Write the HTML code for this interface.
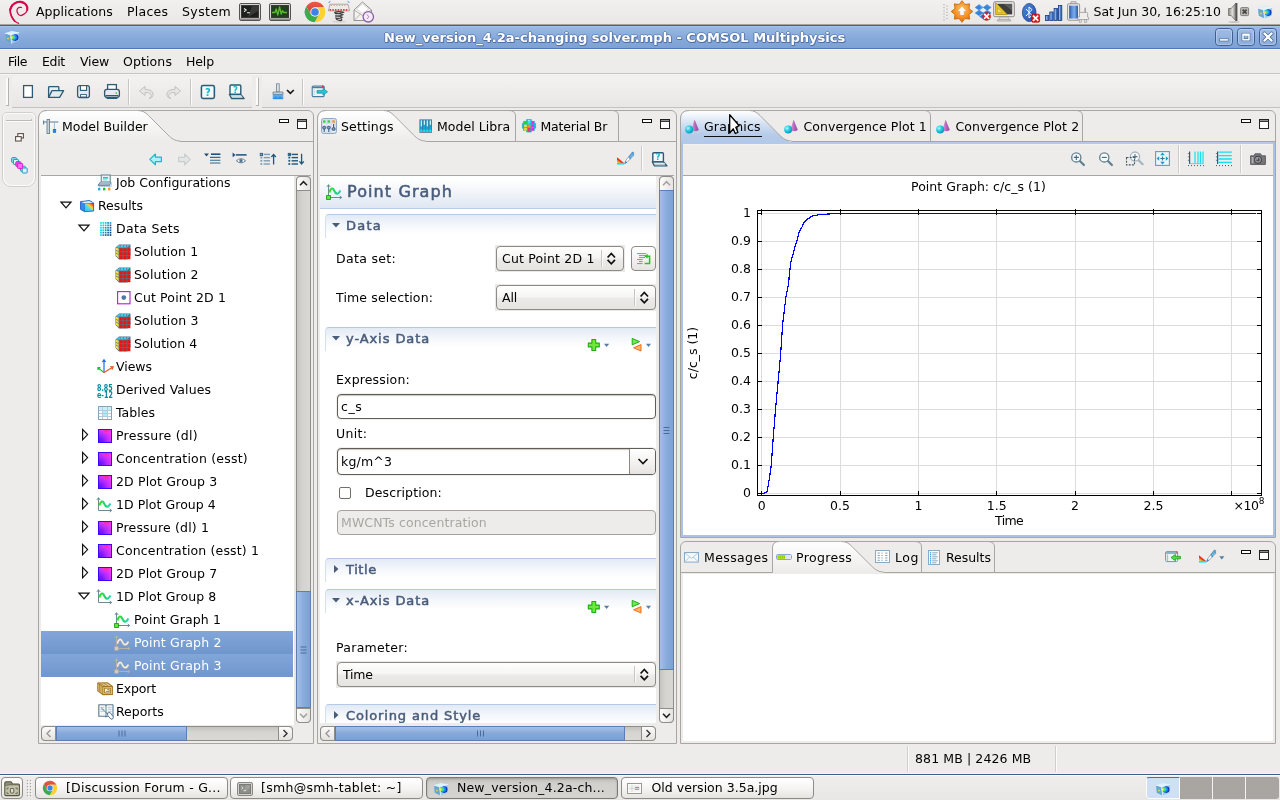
<!DOCTYPE html>
<html><head><meta charset="utf-8"><title>COMSOL Multiphysics</title>
<style>
*{box-sizing:border-box;margin:0;padding:0}
html,body{width:1280px;height:800px;overflow:hidden;background:#edeceb;font-family:"DejaVu Sans","Liberation Sans",sans-serif;font-size:12.5px;color:#000}
.a{position:absolute}
.t{position:absolute;white-space:nowrap;line-height:16px;height:16px}
svg{position:absolute;overflow:visible}
</style></head>
<body>
<div id="root" class="a" style="left:0;top:0;width:1280px;height:800px;will-change:transform">
<div class="a" style="left:0px;top:0px;width:1280px;height:24px;background:linear-gradient(#f1f0ee,#eae8e6);"></div>
<div class="a" style="left:0px;top:24px;width:1280px;height:1px;background:#aaa39b;"></div>
<div class="t " style="left:36px;top:4px;letter-spacing:0.032px;">Applications</div>
<div class="t " style="left:127px;top:4px;letter-spacing:0.253px;">Places</div>
<div class="t " style="left:182px;top:4px;letter-spacing:0.413px;">System</div>
<div class="t " style="left:1093.5px;top:4px;letter-spacing:-0.027px;">Sat Jun 30, 16:25:10</div>
<div class="a" style="left:0px;top:25px;width:1280px;height:24px;background:linear-gradient(#9cbae6 0%,#92b2e0 25%,#85a8da 60%,#7ea2d6 100%);border-top:1px solid #465f85;border-bottom:1px solid #4f7ab5;"></div>
<div class="a" style="left:0px;top:26px;width:1280px;height:1px;background:#a5c2ea;"></div>
<div class="a" style="left:0px;top:49px;width:1280px;height:1px;background:#f6f4f1;"></div>
<div class="t " style="left:384px;top:30px;letter-spacing:0.002px;font-weight:bold;font-size:13px;color:#fff;text-shadow:0 1px 0 #4d6fa6,1px 0 0 #5d7fb4,-1px 0 0 #5d7fb4,0 -1px 0 #6a8cc0,1px 1px 0 #5475ab;">New_version_4.2a-changing solver.mph - COMSOL Multiphysics</div>
<div class="a" style="left:0px;top:50px;width:1280px;height:24px;background:#edeceb;border-bottom:1px solid #c8c5c0;"></div>
<div class="a" style="left:0px;top:74px;width:1280px;height:1px;background:#f7f6f5;"></div>
<div class="t " style="left:8px;top:54px;letter-spacing:-0.475px;">File</div>
<div class="t " style="left:42px;top:54px;letter-spacing:-0.335px;">Edit</div>
<div class="t " style="left:80px;top:54px;letter-spacing:-0.180px;">View</div>
<div class="t " style="left:123px;top:54px;letter-spacing:0.114px;">Options</div>
<div class="t " style="left:186px;top:54px;letter-spacing:-0.121px;">Help</div>
<div class="a" style="left:0px;top:75px;width:1280px;height:33px;background:#edeceb;"></div>
<div class="a" style="left:2px;top:112px;width:34px;height:75px;border:1px solid #d2cfcb;border-radius:5px 5px 9px 9px;background:#fbfbfa;"></div>
<div class="a" style="left:4px;top:114px;width:30px;height:71px;border-radius:4px 4px 8px 8px;background:#edeceb;"></div>
<div class="a" style="left:6px;top:119.5px;width:25px;height:1px;background:#bdbab5;"></div>
<div class="a" style="left:6px;top:120.5px;width:26px;height:1px;background:#fbfbfa;"></div>
<div class="a" style="left:31px;top:118.5px;width:1px;height:2px;background:#bdbab5;"></div>
<div class="a" style="left:38px;top:110px;width:276px;height:634px;border:1px solid #a9a6a1;border-radius:9px 6px 0 0;background:#edeceb;"></div>
<div class="a" style="left:41px;top:175px;width:270px;height:1px;background:#a9a6a1;"></div>
<div class="a" style="left:41px;top:176px;width:252.5px;height:549px;background:#fff;"></div>
<div class="a" style="left:293.5px;top:176px;width:2.5px;height:549px;background:#e8e6e3;"></div>
<svg style="left:0;top:0" width="1" height="1"><defs><linearGradient id="gm" x1="0" y1="110" x2="0" y2="141" gradientUnits="userSpaceOnUse"><stop offset="0" stop-color="#ffffff"/><stop offset="1" stop-color="#edeceb"/></linearGradient></defs><path d="M38.5 141.5 L38.5 119 Q38.5 110.5 47 110.5 L138 110.5 C142.5 110.5 145.5 112.5 148.5 115.5 L168 135 C171.5 138.5 175 141 180 141 Z" fill="url(#gm)"/><path d="M138 110.5 C142.5 110.5 145.5 112.5 148.5 115.5 L168 135 C171.5 138.5 175 141 180 141" fill="none" stroke="#a9a6a1" stroke-width="1"/><path d="M38.5 141.5 V119 Q38.5 110.5 47 110.5" fill="none" stroke="#a9a6a1"/><path d="M47 110.5 H138" fill="none" stroke="#a9a6a1" stroke-opacity="0.55"/><path d="M180 141.5 H313" stroke="#a9a6a1" stroke-width="1"/></svg>
<div class="t " style="left:62px;top:119px;">Model Builder</div>
<svg style="left:0;top:0" width="1" height="1"><rect x="279.5" y="119.5" width="9" height="3" fill="#fff" stroke="#111" stroke-width="1"/><rect x="297.5" y="119.5" width="9" height="9" fill="#fff" stroke="#222" stroke-width="1"/><path d="M297.5 121.2 h9" stroke="#222" stroke-width="1.4"/></svg>
<div class="a" style="left:41px;top:631px;width:252px;height:22.6px;background:linear-gradient(#82a6d8,#6f96cd);"></div>
<div class="a" style="left:41px;top:654px;width:252px;height:22.6px;background:linear-gradient(#82a6d8,#6f96cd);"></div>
<div class="t " style="left:116px;top:175px;letter-spacing:-0.001px;">Job Configurations</div>
<div class="t " style="left:98px;top:198px;letter-spacing:-0.021px;">Results</div>
<svg style="left:0;top:0" width="1" height="1"><path d="M61 202.2 h10 l-5 5.6z" fill="#fff" stroke="#111" stroke-width="1.25" stroke-linejoin="miter"/></svg>
<div class="t " style="left:116px;top:221px;letter-spacing:0.332px;">Data Sets</div>
<svg style="left:0;top:0" width="1" height="1"><path d="M79 225.2 h10 l-5 5.6z" fill="#fff" stroke="#111" stroke-width="1.25" stroke-linejoin="miter"/></svg>
<div class="t " style="left:134px;top:244px;letter-spacing:0.156px;">Solution 1</div>
<div class="t " style="left:134px;top:267px;letter-spacing:0.178px;">Solution 2</div>
<div class="t " style="left:134px;top:290px;letter-spacing:0.147px;">Cut Point 2D 1</div>
<div class="t " style="left:134px;top:313px;letter-spacing:0.178px;">Solution 3</div>
<div class="t " style="left:134px;top:336px;letter-spacing:0.045px;">Solution 4</div>
<div class="t " style="left:116px;top:359px;letter-spacing:-0.041px;">Views</div>
<div class="t " style="left:116px;top:382px;letter-spacing:0.096px;">Derived Values</div>
<div class="t " style="left:116px;top:405px;letter-spacing:0.035px;">Tables</div>
<div class="t " style="left:116px;top:428px;letter-spacing:0.264px;">Pressure (dl)</div>
<svg style="left:0;top:0" width="1" height="1"><path d="M82.6 429.4 v10.4 l5 -5.2z" fill="#fff" stroke="#111" stroke-width="1.2" stroke-linejoin="miter"/></svg>
<div class="t " style="left:116px;top:451px;letter-spacing:0.206px;">Concentration (esst)</div>
<svg style="left:0;top:0" width="1" height="1"><path d="M82.6 452.4 v10.4 l5 -5.2z" fill="#fff" stroke="#111" stroke-width="1.2" stroke-linejoin="miter"/></svg>
<div class="t " style="left:116px;top:474px;letter-spacing:0.149px;">2D Plot Group 3</div>
<svg style="left:0;top:0" width="1" height="1"><path d="M82.6 475.4 v10.4 l5 -5.2z" fill="#fff" stroke="#111" stroke-width="1.2" stroke-linejoin="miter"/></svg>
<div class="t " style="left:116px;top:497px;letter-spacing:0.049px;">1D Plot Group 4</div>
<svg style="left:0;top:0" width="1" height="1"><path d="M82.6 498.4 v10.4 l5 -5.2z" fill="#fff" stroke="#111" stroke-width="1.2" stroke-linejoin="miter"/></svg>
<div class="t " style="left:116px;top:520px;letter-spacing:0.180px;">Pressure (dl) 1</div>
<svg style="left:0;top:0" width="1" height="1"><path d="M82.6 521.4 v10.4 l5 -5.2z" fill="#fff" stroke="#111" stroke-width="1.2" stroke-linejoin="miter"/></svg>
<div class="t " style="left:116px;top:543px;letter-spacing:0.155px;">Concentration (esst) 1</div>
<svg style="left:0;top:0" width="1" height="1"><path d="M82.6 544.4 v10.4 l5 -5.2z" fill="#fff" stroke="#111" stroke-width="1.2" stroke-linejoin="miter"/></svg>
<div class="t " style="left:116px;top:566px;letter-spacing:0.149px;">2D Plot Group 7</div>
<svg style="left:0;top:0" width="1" height="1"><path d="M82.6 567.4 v10.4 l5 -5.2z" fill="#fff" stroke="#111" stroke-width="1.2" stroke-linejoin="miter"/></svg>
<div class="t " style="left:116px;top:589px;letter-spacing:0.078px;">1D Plot Group 8</div>
<svg style="left:0;top:0" width="1" height="1"><path d="M79 593.2 h10 l-5 5.6z" fill="#fff" stroke="#111" stroke-width="1.25" stroke-linejoin="miter"/></svg>
<div class="t " style="left:134px;top:612px;letter-spacing:0.140px;">Point Graph 1</div>
<div class="t " style="left:134px;top:635px;letter-spacing:0.181px;color:#fff;">Point Graph 2</div>
<div class="t " style="left:134px;top:658px;letter-spacing:0.181px;color:#fff;">Point Graph 3</div>
<div class="t " style="left:116px;top:681px;letter-spacing:-0.163px;">Export</div>
<div class="t " style="left:116px;top:704px;letter-spacing:-0.039px;">Reports</div>
<div class="a" style="left:296px;top:176px;width:15px;height:547px;background:linear-gradient(90deg,#c6c4c1,#d5d3d0 40%,#d9d7d4);border:1px solid #8f8d89;border-radius:4px;"></div>
<div class="a" style="left:296px;top:176px;width:15px;height:15px;background:linear-gradient(90deg,#fcfcfb,#e6e4e1);border:1px solid #8f8d89;border-radius:4px 4px 0 0;"></div>
<div class="a" style="left:296px;top:708px;width:15px;height:15px;background:linear-gradient(90deg,#fcfcfb,#e6e4e1);border:1px solid #8f8d89;border-radius:0 0 4px 4px;"></div>
<svg style="left:0;top:0" width="1" height="1"><path d="M300 185.3 l3.5 -3.6 l3.5 3.6" fill="none" stroke="#222" stroke-width="1.5"/><path d="M300 713.7 l3.5 3.6 l3.5 -3.6" fill="none" stroke="#a5a29d" stroke-width="1.5"/></svg>
<div class="a" style="left:296px;top:591px;width:15px;height:117px;background:linear-gradient(90deg,#a3bfe6,#89abdc 50%,#7da1d6);border:1px solid #5b7fb4;"></div>
<svg style="left:0;top:0" width="1" height="1"><path d="M300.5 647 h6 M300.5 650 h6 M300.5 653 h6" stroke="#4a6a9c" stroke-width="1"/></svg>
<div class="a" style="left:41px;top:726px;width:252px;height:15px;background:linear-gradient(#c4c2bf,#d6d4d1 40%,#dad8d5);border:1px solid #8f8d89;border-radius:4px;"></div>
<div class="a" style="left:41px;top:726px;width:15px;height:15px;background:linear-gradient(#fbfbfa,#e4e2df);border:1px solid #8f8d89;border-radius:4px 0 0 4px;"></div>
<div class="a" style="left:278px;top:726px;width:15px;height:15px;background:linear-gradient(#fbfbfa,#e4e2df);border:1px solid #8f8d89;border-radius:0 4px 4px 0;"></div>
<svg style="left:0;top:0" width="1" height="1"><path d="M50.5 730 l-3.5 3.5 l3.5 3.5" fill="none" stroke="#9a9894" stroke-width="1.4"/><path d="M283.5 730 l3.5 3.5 l-3.5 3.5" fill="none" stroke="#333" stroke-width="1.4"/></svg>
<div class="a" style="left:56px;top:726px;width:131px;height:15px;background:linear-gradient(#a5c0e6,#86a9db 50%,#7a9fd4);border:1px solid #5b7fb4;"></div>
<svg style="left:0;top:0" width="1" height="1"><path d="M119 730.5 v6 M122 730.5 v6 M125 730.5 v6" stroke="#4a6a9c" stroke-width="1"/></svg>
<div class="a" style="left:317px;top:110px;width:360px;height:634px;border:1px solid #a9a6a1;border-radius:9px 6px 0 0;background:#edeceb;"></div>
<svg style="left:0;top:0" width="1" height="1"><path d="M509 110.5 Q515.5 110.5 515.5 116 V141" fill="none" stroke="#a9a6a1"/></svg>
<svg style="left:0;top:0" width="1" height="1"><path d="M612 110.5 Q618.5 110.5 618.5 116 V141" fill="none" stroke="#a9a6a1"/></svg>
<svg style="left:0;top:0" width="1" height="1"><defs><linearGradient id="gs" x1="0" y1="110" x2="0" y2="141" gradientUnits="userSpaceOnUse"><stop offset="0" stop-color="#ffffff"/><stop offset="1" stop-color="#edeceb"/></linearGradient></defs><path d="M317.5 141.5 L317.5 119 Q317.5 110.5 326 110.5 L383.6 110.5 C388.1 110.5 391.1 112.5 394.1 115.5 L413.6 135 C417.1 138.5 420.6 141 425.6 141 Z" fill="url(#gs)"/><path d="M383.6 110.5 C388.1 110.5 391.1 112.5 394.1 115.5 L413.6 135 C417.1 138.5 420.6 141 425.6 141" fill="none" stroke="#a9a6a1" stroke-width="1"/><path d="M317.5 141.5 V119 Q317.5 110.5 326 110.5" fill="none" stroke="#a9a6a1"/><path d="M326 110.5 H383.6" fill="none" stroke="#a9a6a1" stroke-opacity="0.55"/><path d="M425.6 141.5 H676" stroke="#a9a6a1" stroke-width="1"/></svg>
<div class="t " style="left:341px;top:119px;letter-spacing:0.178px;">Settings</div>
<div class="t " style="left:437px;top:119px;letter-spacing:0.039px;">Model Libra</div>
<div class="t " style="left:540.4px;top:119px;letter-spacing:-0.153px;">Material Br</div>
<svg style="left:0;top:0" width="1" height="1"><rect x="642.5" y="119.5" width="9" height="3" fill="#fff" stroke="#111" stroke-width="1"/><rect x="660.5" y="119.5" width="9" height="9" fill="#fff" stroke="#222" stroke-width="1"/><path d="M660.5 121.2 h9" stroke="#222" stroke-width="1.4"/></svg>
<div class="a" style="left:641px;top:146px;width:1px;height:25px;background:#cfccc8;"></div>
<div class="a" style="left:642px;top:146px;width:1px;height:25px;background:#fbfbfa;"></div>
<div class="a" style="left:320px;top:175px;width:336px;height:548px;background:#fff;border-top:1px solid #a9a6a1;overflow:hidden">
<div class="a" style="left:-320px;top:-176px;width:1px;height:1px">
<div class="a" style="left:320px;top:176px;width:340px;height:33px;background:linear-gradient(#ffffff 10%,#eef2f8 60%,#dfe7f3);border-bottom:1px solid #b9cde8;"></div>
<svg style="left:325.5px;top:184px" width="17" height="16" viewBox="0 0 17 16"><path d="M2.5 1 V13.5 H15.5" fill="none" stroke="#6b8a96" stroke-width="1"/><path d="M0.8 3 L2.5 0.6 L4.2 3 M13.6 11.9 L15.8 13.5 L13.6 15.1" fill="none" stroke="#6b8a96" stroke-width="0.9"/><defs><linearGradient id="p1184" x1="0" y1="0" x2="1" y2="0"><stop offset="0" stop-color="#2fe01a"/><stop offset="0.55" stop-color="#1fd67a"/><stop offset="1" stop-color="#2ad0b0"/></linearGradient></defs><path d="M3.4 8.6 C4.4 4.4 6.4 3 8 6.2 C9.6 9.8 11.8 11.6 14.4 6.6" fill="none" stroke="url(#p1184)" stroke-width="2.1"/><rect x="0.6" y="11.6" width="3.8" height="3.8" fill="#5af03a" stroke="#12a012" stroke-width="0.9"/></svg>
<div class="t " style="left:347px;top:182px;font-size:16px;letter-spacing:1.1px;color:#495c7c;-webkit-text-stroke:0.55px #495c7c;line-height:20px;height:20px;">Point Graph</div>
<div class="a" style="left:325px;top:214px;width:340px;height:24px;border-top:1px solid #b4c9e6;border-left:1px solid #d5e0f0;border-radius:4px 0 0 0;background:linear-gradient(#e3eaf5,#f4f7fb 45%,#ffffff 85%);"></div>
<svg style="left:0;top:0" width="1" height="1"><path d="M332 223 h8 l-4 4.5z" fill="#495c7c"/></svg>
<div class="t " style="left:346px;top:218px;letter-spacing:1.209px;font-size:13px;color:#495c7c;-webkit-text-stroke:0.5px #495c7c;">Data</div>
<div class="t " style="left:336px;top:251px;letter-spacing:0.335px;">Data set:</div>
<div class="a" style="left:495px;top:245px;width:130px;height:27px;background:#ebe9e6;"></div>
<div class="a" style="left:496px;top:246px;width:128px;height:25px;border:1px solid #8e8b86;border-radius:4px;background:linear-gradient(#ffffff,#f6f5f4 45%,#eceae8 55%,#e6e4e1);"></div>
<div class="a" style="left:601px;top:250px;width:1px;height:17px;background:#c9c6c1;"></div>
<div class="a" style="left:602px;top:250px;width:1px;height:17px;background:#fbfbfa;"></div>
<svg style="left:0;top:0" width="1" height="1"><path d="M607.6 257.5 l3.7 -4 l3.7 4 M607.6 259.8 l3.7 4 l3.7 -4" fill="none" stroke="#111" stroke-width="1.7"/></svg>
<div class="t " style="left:502px;top:251px;letter-spacing:0.178px;">Cut Point 2D 1</div>
<div class="a" style="left:631px;top:246px;width:25px;height:25px;border:1px solid #8e8b86;border-radius:4px;background:linear-gradient(#ffffff,#f4f3f2 50%,#e6e4e1);"></div>
<svg style="left:637px;top:252.5px" width="14" height="12" viewBox="0 0 14 12"><path d="M0 0.6 h9 M2 2.6 h7 M2 4.6 h6 M0 6.6 h5.6 M2 8.6 h3.6 M0 10.6 h5.6" stroke="#6f9ab0" stroke-width="1"/><path d="M7.6 10.6 H12.6 V3.2 H8.6" fill="none" stroke="#1fc81f" stroke-width="1.5"/><path d="M10.6 0.8 L7.4 3.2 L10.6 5.6Z" fill="#1fc81f"/></svg>
<div class="t " style="left:336px;top:290px;letter-spacing:0.139px;">Time selection:</div>
<div class="a" style="left:495px;top:284px;width:162px;height:27px;background:#ebe9e6;"></div>
<div class="a" style="left:496px;top:285px;width:160px;height:25px;border:1px solid #8e8b86;border-radius:4px;background:linear-gradient(#ffffff,#f6f5f4 45%,#eceae8 55%,#e6e4e1);"></div>
<div class="a" style="left:634px;top:289px;width:1px;height:17px;background:#c9c6c1;"></div>
<div class="a" style="left:635px;top:289px;width:1px;height:17px;background:#fbfbfa;"></div>
<svg style="left:0;top:0" width="1" height="1"><path d="M640.6 296.5 l3.7 -4 l3.7 4 M640.6 298.8 l3.7 4 l3.7 -4" fill="none" stroke="#111" stroke-width="1.7"/></svg>
<div class="t " style="left:502px;top:290px;letter-spacing:-0.112px;">All</div>
<div class="a" style="left:325px;top:327px;width:340px;height:24px;border-top:1px solid #b4c9e6;border-left:1px solid #d5e0f0;border-radius:4px 0 0 0;background:linear-gradient(#e3eaf5,#f4f7fb 45%,#ffffff 85%);"></div>
<svg style="left:0;top:0" width="1" height="1"><path d="M332 336 h8 l-4 4.5z" fill="#495c7c"/></svg>
<div class="t " style="left:346px;top:331px;letter-spacing:0.915px;font-size:13px;color:#495c7c;-webkit-text-stroke:0.5px #495c7c;">y-Axis Data</div>
<svg style="left:0;top:0" width="1" height="1"><path d="M588.3 343.1 h3.6 v-3.6 h3.8 v3.6 h3.6 v3.8 h-3.6 v3.6 h-3.8 v-3.6 h-3.6z" fill="#6ee83a" stroke="#22ac14" stroke-width="1.1" stroke-linejoin="round"/><path d="M604 343.8 h5.2 l-2.6 3.2z" fill="#557fa6"/><path d="M632.2 338.4 l7.4 3.2 l-7.4 3.2z" fill="#6fe85a" stroke="#22ac14" stroke-width="1" stroke-linejoin="round"/><path d="M641 344.6 l-7.4 3.2 l7.4 3.2z" fill="#ffb46a" stroke="#f0701a" stroke-width="1" stroke-linejoin="round"/><path d="M646 343.8 h5 l-2.5 3.2z" fill="#557fa6"/></svg>
<div class="t " style="left:336px;top:372px;letter-spacing:0.165px;">Expression:</div>
<div class="a" style="left:337px;top:394px;width:319px;height:25px;border:1px solid #605d58;border-radius:4px;background:#fff;box-shadow:inset 0 1px 1px #c9c6c1,0 0 0 1px #f1f0ee;"></div>
<div class="t " style="left:341px;top:399px;letter-spacing:0.589px;">c_s</div>
<div class="t " style="left:336px;top:426px;letter-spacing:0.339px;">Unit:</div>
<div class="a" style="left:337px;top:448px;width:319px;height:27px;border:1px solid #605d58;border-radius:4px;background:#fff;box-shadow:inset 0 1px 1px #c9c6c1,0 0 0 1px #f1f0ee;"></div>
<div class="a" style="left:629px;top:449px;width:26px;height:25px;border-radius:0 3px 3px 0;border-left:1px solid #8e8b86;background:linear-gradient(#ffffff,#f4f3f2 50%,#e6e4e1);"></div>
<svg style="left:0;top:0" width="1" height="1"><path d="M638.5 459 l4.5 4.5 l4.5 -4.5" fill="none" stroke="#111" stroke-width="1.6"/></svg>
<div class="t " style="left:341px;top:454px;letter-spacing:0.193px;">kg/m^3</div>
<div class="a" style="left:339px;top:487px;width:12px;height:12px;border:1px solid #716e69;border-radius:2px;background:#fff;"></div>
<div class="t " style="left:365px;top:485px;letter-spacing:0.128px;">Description:</div>
<div class="a" style="left:337px;top:510px;width:319px;height:25px;border:1px solid #a5a29d;border-radius:4px;background:#edeceb;"></div>
<div class="t " style="left:341px;top:515px;letter-spacing:0.093px;color:#a9a6a1;">MWCNTs concentration</div>
<div class="a" style="left:325px;top:558px;width:340px;height:24px;border-top:1px solid #b4c9e6;border-left:1px solid #d5e0f0;border-radius:4px 0 0 0;background:linear-gradient(#e3eaf5,#f4f7fb 45%,#ffffff 85%);"></div>
<svg style="left:0;top:0" width="1" height="1"><path d="M334 565 v8 l4.5 -4z" fill="#495c7c"/></svg>
<div class="t " style="left:346px;top:562px;letter-spacing:0.585px;font-size:13px;color:#495c7c;-webkit-text-stroke:0.5px #495c7c;">Title</div>
<div class="a" style="left:325px;top:589px;width:340px;height:24px;border-top:1px solid #b4c9e6;border-left:1px solid #d5e0f0;border-radius:4px 0 0 0;background:linear-gradient(#e3eaf5,#f4f7fb 45%,#ffffff 85%);"></div>
<svg style="left:0;top:0" width="1" height="1"><path d="M332 598 h8 l-4 4.5z" fill="#495c7c"/></svg>
<div class="t " style="left:346px;top:593px;letter-spacing:0.892px;font-size:13px;color:#495c7c;-webkit-text-stroke:0.5px #495c7c;">x-Axis Data</div>
<svg style="left:0;top:0" width="1" height="1"><path d="M588.3 605.1 h3.6 v-3.6 h3.8 v3.6 h3.6 v3.8 h-3.6 v3.6 h-3.8 v-3.6 h-3.6z" fill="#6ee83a" stroke="#22ac14" stroke-width="1.1" stroke-linejoin="round"/><path d="M604 605.8 h5.2 l-2.6 3.2z" fill="#557fa6"/><path d="M632.2 600.4 l7.4 3.2 l-7.4 3.2z" fill="#6fe85a" stroke="#22ac14" stroke-width="1" stroke-linejoin="round"/><path d="M641 606.6 l-7.4 3.2 l7.4 3.2z" fill="#ffb46a" stroke="#f0701a" stroke-width="1" stroke-linejoin="round"/><path d="M646 605.8 h5 l-2.5 3.2z" fill="#557fa6"/></svg>
<div class="t " style="left:336px;top:640px;letter-spacing:0.287px;">Parameter:</div>
<div class="a" style="left:336px;top:661px;width:321px;height:27px;background:#ebe9e6;"></div>
<div class="a" style="left:337px;top:662px;width:319px;height:25px;border:1px solid #8e8b86;border-radius:4px;background:linear-gradient(#ffffff,#f6f5f4 45%,#eceae8 55%,#e6e4e1);"></div>
<div class="a" style="left:634px;top:666px;width:1px;height:17px;background:#c9c6c1;"></div>
<div class="a" style="left:635px;top:666px;width:1px;height:17px;background:#fbfbfa;"></div>
<svg style="left:0;top:0" width="1" height="1"><path d="M640.6 673.5 l3.7 -4 l3.7 4 M640.6 675.8 l3.7 4 l3.7 -4" fill="none" stroke="#111" stroke-width="1.7"/></svg>
<div class="t " style="left:343px;top:667px;letter-spacing:-0.233px;">Time</div>
<div class="a" style="left:325px;top:704px;width:340px;height:24px;border-top:1px solid #b4c9e6;border-left:1px solid #d5e0f0;border-radius:4px 0 0 0;background:linear-gradient(#e3eaf5,#f4f7fb 45%,#ffffff 85%);"></div>
<svg style="left:0;top:0" width="1" height="1"><path d="M334 711 v8 l4.5 -4z" fill="#495c7c"/></svg>
<div class="t " style="left:346px;top:708px;letter-spacing:0.869px;font-size:13px;color:#495c7c;-webkit-text-stroke:0.5px #495c7c;">Coloring and Style</div>
</div></div>
<div class="a" style="left:320px;top:175px;width:354px;height:1px;background:#a9a6a1;"></div>
<div class="a" style="left:659px;top:176px;width:15px;height:547px;background:linear-gradient(90deg,#c6c4c1,#d5d3d0 40%,#d9d7d4);border:1px solid #8f8d89;border-radius:4px;"></div>
<div class="a" style="left:659px;top:176px;width:15px;height:15px;background:linear-gradient(90deg,#fcfcfb,#e6e4e1);border:1px solid #8f8d89;border-radius:4px 4px 0 0;"></div>
<div class="a" style="left:659px;top:708px;width:15px;height:15px;background:linear-gradient(90deg,#fcfcfb,#e6e4e1);border:1px solid #8f8d89;border-radius:0 0 4px 4px;"></div>
<svg style="left:0;top:0" width="1" height="1"><path d="M663 185.3 l3.5 -3.6 l3.5 3.6" fill="none" stroke="#a5a29d" stroke-width="1.5"/><path d="M663 713.7 l3.5 3.6 l3.5 -3.6" fill="none" stroke="#222" stroke-width="1.5"/></svg>
<div class="a" style="left:659px;top:190px;width:15px;height:480px;background:linear-gradient(90deg,#a3bfe6,#89abdc 50%,#7da1d6);border:1px solid #5b7fb4;"></div>
<svg style="left:0;top:0" width="1" height="1"><path d="M663.5 427.5 h6 M663.5 430.5 h6 M663.5 433.5 h6" stroke="#4a6a9c" stroke-width="1"/></svg>
<div class="a" style="left:320px;top:726px;width:336px;height:15px;background:linear-gradient(#c4c2bf,#d6d4d1 40%,#dad8d5);border:1px solid #8f8d89;border-radius:4px;"></div>
<div class="a" style="left:320px;top:726px;width:15px;height:15px;background:linear-gradient(#fbfbfa,#e4e2df);border:1px solid #8f8d89;border-radius:4px 0 0 4px;"></div>
<div class="a" style="left:641px;top:726px;width:15px;height:15px;background:linear-gradient(#fbfbfa,#e4e2df);border:1px solid #8f8d89;border-radius:0 4px 4px 0;"></div>
<svg style="left:0;top:0" width="1" height="1"><path d="M329.5 730 l-3.5 3.5 l3.5 3.5" fill="none" stroke="#9a9894" stroke-width="1.4"/><path d="M646.5 730 l3.5 3.5 l-3.5 3.5" fill="none" stroke="#333" stroke-width="1.4"/></svg>
<div class="a" style="left:335px;top:726px;width:290px;height:15px;background:linear-gradient(#a5c0e6,#86a9db 50%,#7a9fd4);border:1px solid #5b7fb4;"></div>
<svg style="left:0;top:0" width="1" height="1"><path d="M477.5 730.5 v6 M480.5 730.5 v6 M483.5 730.5 v6" stroke="#4a6a9c" stroke-width="1"/></svg>
<div class="a" style="left:680px;top:110px;width:596px;height:428px;border:1px solid #a9a6a1;border-radius:9px 6px 0 0;background:#edeceb;"></div>
<div class="a" style="left:681px;top:142px;width:594px;height:2px;background:#b3c9e9;"></div>
<div class="a" style="left:683px;top:144px;width:590px;height:1px;background:#f3f1ee;"></div>
<div class="a" style="left:681px;top:141px;width:108px;height:1px;background:#b3c9e9;"></div>
<div class="a" style="left:681px;top:141px;width:2px;height:396px;background:#a9c2e7;"></div>
<div class="a" style="left:1273px;top:141px;width:2px;height:396px;background:#a9c2e7;"></div>
<div class="a" style="left:681px;top:535px;width:594px;height:2px;background:#a9c2e7;"></div>
<svg style="left:0;top:0" width="1" height="1"><path d="M924 110.5 Q930.5 110.5 930.5 116 V141" fill="none" stroke="#a9a6a1"/></svg>
<svg style="left:0;top:0" width="1" height="1"><path d="M1076 110.5 Q1082.5 110.5 1082.5 116 V141" fill="none" stroke="#a9a6a1"/></svg>
<svg style="left:0;top:0" width="1" height="1"><defs><linearGradient id="gg" x1="0" y1="110" x2="0" y2="141" gradientUnits="userSpaceOnUse"><stop offset="0" stop-color="#ffffff"/><stop offset="0.12" stop-color="#f6f9fd"/><stop offset="0.45" stop-color="#d3e0f2"/><stop offset="0.8" stop-color="#b6cbe9"/><stop offset="1" stop-color="#b3c9e9"/></linearGradient></defs><path d="M680.5 141.5 L680.5 119 Q680.5 110.5 689 110.5 L749.5 110.5 C754 110.5 757 112.5 760 115.5 L779.5 135 C783 138.5 786.5 141 791.5 141 Z" fill="url(#gg)"/><path d="M749.5 110.5 C754 110.5 757 112.5 760 115.5 L779.5 135 C783 138.5 786.5 141 791.5 141" fill="none" stroke="#a9a6a1" stroke-width="1"/><path d="M680.5 141.5 V119 Q680.5 110.5 689 110.5" fill="none" stroke="#a9a6a1"/><path d="M689 110.5 H749.5" fill="none" stroke="#a9a6a1" stroke-opacity="0.55"/><path d="M791.5 141.5 H1275" stroke="#a9a6a1" stroke-width="1"/></svg>
<div class="t " style="left:704px;top:119px;letter-spacing:0.187px;">Graphics</div>
<div class="a" style="left:704px;top:136px;width:58px;height:1.2px;background:#111;"></div>
<div class="t " style="left:803.5px;top:119px;letter-spacing:0.075px;">Convergence Plot 1</div>
<div class="t " style="left:955.5px;top:119px;letter-spacing:0.105px;">Convergence Plot 2</div>
<svg style="left:0;top:0" width="1" height="1"><rect x="1241.5" y="119.5" width="9" height="3" fill="#fff" stroke="#111" stroke-width="1"/><rect x="1259.5" y="119.5" width="9" height="9" fill="#fff" stroke="#222" stroke-width="1"/><path d="M1259.5 121.2 h9" stroke="#222" stroke-width="1.4"/></svg>
<div class="a" style="left:1178px;top:145px;width:1px;height:28px;background:#cfccc8;"></div>
<div class="a" style="left:1179px;top:145px;width:1px;height:28px;background:#fbfbfa;"></div>
<div class="a" style="left:1240px;top:145px;width:1px;height:28px;background:#cfccc8;"></div>
<div class="a" style="left:1241px;top:145px;width:1px;height:28px;background:#fbfbfa;"></div>
<div class="a" style="left:683px;top:175px;width:590px;height:360px;background:#fff;border-top:1px solid #a9a6a1;"></div>
<svg style="left:0;top:0" width="1280" height="800" viewBox="0 0 1280 800"><path d="M761.5 210.5 V495.5 M840.5 210.5 V495.5 M918.5 210.5 V495.5 M996.5 210.5 V495.5 M1075.5 210.5 V495.5 M1153.5 210.5 V495.5 M1231.5 210.5 V495.5 M757.5 493.5 H1261.5 M757.5 465.5 H1261.5 M757.5 437.5 H1261.5 M757.5 409.5 H1261.5 M757.5 381.5 H1261.5 M757.5 353.5 H1261.5 M757.5 325.5 H1261.5 M757.5 297.5 H1261.5 M757.5 269.5 H1261.5 M757.5 241.5 H1261.5 M757.5 213.5 H1261.5 " stroke="#dcdcdc" stroke-width="1" fill="none" shape-rendering="crispEdges"/><rect x="757.5" y="210.5" width="504" height="285" fill="none" stroke="#000" stroke-width="1.2" shape-rendering="crispEdges"/><path d="M761.5 209 v5.5 M761.5 495.5 v-4.5 M840.5 209 v5.5 M840.5 495.5 v-4.5 M918.5 209 v5.5 M918.5 495.5 v-4.5 M996.5 209 v5.5 M996.5 495.5 v-4.5 M1075.5 209 v5.5 M1075.5 495.5 v-4.5 M1153.5 209 v5.5 M1153.5 495.5 v-4.5 M1231.5 209 v5.5 M1231.5 495.5 v-4.5 M757.5 493.5 h4.8 M1261.5 493.5 h-4.8 M757.5 465.5 h4.8 M1261.5 465.5 h-4.8 M757.5 437.5 h4.8 M1261.5 437.5 h-4.8 M757.5 409.5 h4.8 M1261.5 409.5 h-4.8 M757.5 381.5 h4.8 M1261.5 381.5 h-4.8 M757.5 353.5 h4.8 M1261.5 353.5 h-4.8 M757.5 325.5 h4.8 M1261.5 325.5 h-4.8 M757.5 297.5 h4.8 M1261.5 297.5 h-4.8 M757.5 269.5 h4.8 M1261.5 269.5 h-4.8 M757.5 241.5 h4.8 M1261.5 241.5 h-4.8 M757.5 213.5 h4.8 M1261.5 213.5 h-4.8 " stroke="#000" stroke-width="1.2" fill="none" shape-rendering="crispEdges"/><path d="M761.7 493.5 L764.5 493.199 L766.9 491.694 L768.4 484.872 L769.9 474.84 L771.2 465.811 L773.2 437.721 L775.5 409.63 L778.1 381.54 L780.7 353.45 L782.5 325.861 L785.8 297.771 L788.5 284.227 L789.5 273.192 L790.5 264.163 L791.5 259.146 L793.5 253.127 L795 246.105 L796.5 242.092 L798 236.072 L799.5 231.056 L802.5 226.04 L803.5 223.03 L808 218.817 L812 216.208 L818 214.804 L831 213.801 L845 213.6 L1256 213.6" stroke="#0000ff" stroke-width="1.2" fill="none" stroke-linejoin="round" shape-rendering="crispEdges"/></svg>
<div class="t " style="left:911px;top:179px;letter-spacing:0.045px;font-size:12.5px;">Point Graph: c/c_s (1)</div>
<div class="t" style="left:731.7px;top:498px;width:60px;text-align:center;font-size:12.5px;">0</div>
<div class="t" style="left:810.05px;top:498px;width:60px;text-align:center;font-size:12.5px;">0.5</div>
<div class="t" style="left:888.4px;top:498px;width:60px;text-align:center;font-size:12.5px;">1</div>
<div class="t" style="left:966.75px;top:498px;width:60px;text-align:center;font-size:12.5px;">1.5</div>
<div class="t" style="left:1045.1px;top:498px;width:60px;text-align:center;font-size:12.5px;">2</div>
<div class="t" style="left:1123.45px;top:498px;width:60px;text-align:center;font-size:12.5px;">2.5</div>
<div class="t" style="left:701px;top:485px;width:50px;text-align:right;font-size:12.5px;">0</div>
<div class="t" style="left:701px;top:457px;width:50px;text-align:right;font-size:12.5px;">0.1</div>
<div class="t" style="left:701px;top:429px;width:50px;text-align:right;font-size:12.5px;">0.2</div>
<div class="t" style="left:701px;top:401px;width:50px;text-align:right;font-size:12.5px;">0.3</div>
<div class="t" style="left:701px;top:373px;width:50px;text-align:right;font-size:12.5px;">0.4</div>
<div class="t" style="left:701px;top:345px;width:50px;text-align:right;font-size:12.5px;">0.5</div>
<div class="t" style="left:701px;top:317px;width:50px;text-align:right;font-size:12.5px;">0.6</div>
<div class="t" style="left:701px;top:289px;width:50px;text-align:right;font-size:12.5px;">0.7</div>
<div class="t" style="left:701px;top:261px;width:50px;text-align:right;font-size:12.5px;">0.8</div>
<div class="t" style="left:701px;top:233px;width:50px;text-align:right;font-size:12.5px;">0.9</div>
<div class="t" style="left:701px;top:205px;width:50px;text-align:right;font-size:12.5px;">1</div>
<div class="t " style="left:1233.4px;top:498px;font-size:12.5px;letter-spacing:-0.35px;">×10<span style="font-size:9px;position:relative;top:-6px;letter-spacing:0">8</span></div>
<div class="t " style="left:995px;top:513px;letter-spacing:-0.600px;font-size:12.5px;">Time</div>
<div class="t" style="left:663px;top:345px;width:60px;text-align:center;transform:rotate(-90deg);font-size:12.5px;">c/c_s (1)</div>
<svg style="left:0;top:0" width="1" height="1"><path d="M729.7 114.8 L729.7 133 L733.2 128.8 L735.3 133.5 L737.9 132.3 L735.8 127.3 L739.2 125.7 Z" fill="#fff" stroke="#000" stroke-width="1.3" stroke-linejoin="round"/></svg>
<div class="a" style="left:680px;top:541px;width:596px;height:203px;border:1px solid #a9a6a1;border-radius:6px 6px 0 0;background:#edeceb;"></div>
<div class="a" style="left:683px;top:574px;width:590px;height:167px;background:#fff;"></div>
<svg style="left:0;top:0" width="1" height="1"><path d="M915 541.5 Q921.5 541.5 921.5 547 V572" fill="none" stroke="#a9a6a1"/></svg>
<svg style="left:0;top:0" width="1" height="1"><path d="M988 541.5 Q994.5 541.5 994.5 547 V572" fill="none" stroke="#a9a6a1"/></svg>
<svg style="left:0;top:0" width="1" height="1"><defs><linearGradient id="gp" x1="0" y1="541" x2="0" y2="572" gradientUnits="userSpaceOnUse"><stop offset="0" stop-color="#ffffff"/><stop offset="1" stop-color="#edeceb"/></linearGradient></defs><path d="M772.5 572.5 L772.5 548 Q772.5 541.5 779 541.5 L841.5 541.5 C846 541.5 849 543.5 852 546.5 L871.5 566 C875 569.5 878.5 572 883.5 572 Z" fill="url(#gp)"/><path d="M841.5 541.5 C846 541.5 849 543.5 852 546.5 L871.5 566 C875 569.5 878.5 572 883.5 572" fill="none" stroke="#a9a6a1" stroke-width="1"/><path d="M772.5 572.5 V548 Q772.5 541.5 779 541.5" fill="none" stroke="#a9a6a1"/><path d="M779 541.5 H841.5" fill="none" stroke="#a9a6a1" stroke-opacity="0.55"/><path d="M681 572.5 H772.5" stroke="#a9a6a1" stroke-width="1"/><path d="M883.5 572.5 H1275" stroke="#a9a6a1" stroke-width="1"/></svg>
<div class="t " style="left:704px;top:550px;letter-spacing:0.388px;">Messages</div>
<div class="t " style="left:796px;top:550px;letter-spacing:0.353px;">Progress</div>
<div class="t " style="left:895px;top:550px;letter-spacing:0.554px;">Log</div>
<div class="t " style="left:946px;top:550px;letter-spacing:-0.037px;">Results</div>
<svg style="left:0;top:0" width="1" height="1"><rect x="1241.5" y="550.5" width="9" height="3" fill="#fff" stroke="#111" stroke-width="1"/><rect x="1259.5" y="550.5" width="9" height="9" fill="#fff" stroke="#222" stroke-width="1"/><path d="M1259.5 552.2 h9" stroke="#222" stroke-width="1.4"/></svg>
<div class="t " style="left:915px;top:751px;letter-spacing:0.112px;">881 MB | 2426 MB</div>
<div class="a" style="left:907px;top:746px;width:1px;height:26px;background:#d2cfcb;"></div>
<div class="a" style="left:908px;top:746px;width:1px;height:26px;background:#fbfbfa;"></div>
<div class="a" style="left:1055px;top:746px;width:1px;height:26px;background:#d2cfcb;"></div>
<div class="a" style="left:1056px;top:746px;width:1px;height:26px;background:#fbfbfa;"></div>
<div class="a" style="left:0px;top:773px;width:1280px;height:1px;background:#f6f4f1;"></div>
<div class="a" style="left:0px;top:774px;width:1280px;height:1px;background:#3f5f8a;"></div>
<div class="a" style="left:0px;top:775px;width:1280px;height:1px;background:#fbfbfa;"></div>
<div class="a" style="left:0px;top:776px;width:1280px;height:24px;background:linear-gradient(#eeedeb,#e9e7e5);"></div>
<div class="a" style="left:1px;top:777px;width:22px;height:22px;border:1px solid #8e8b86;border-radius:4px;background:linear-gradient(#ffffff,#e6e4e1);"></div>
<svg style="left:0;top:0" width="1" height="1"><path d="M27.5 780 v17 M30.5 780 v17" stroke="#a9a6a1" stroke-width="1.2" stroke-dasharray="1.2 1.8"/><path d="M28.5 781 v17 M31.5 781 v17" stroke="#fbfbfa" stroke-width="1" stroke-dasharray="1.2 1.8"/></svg>
<div class="a" style="left:35px;top:777px;width:193px;height:22px;border:1px solid #8e8b86;border-radius:4px;background:linear-gradient(#ffffff,#f6f5f4 50%,#e6e4e1);"></div>
<div class="t " style="left:66px;top:780px;letter-spacing:0.237px;">[Discussion Forum - G...</div>
<div class="a" style="left:230px;top:777px;width:193px;height:22px;border:1px solid #8e8b86;border-radius:4px;background:linear-gradient(#ffffff,#f6f5f4 50%,#e6e4e1);"></div>
<div class="t " style="left:261px;top:780px;letter-spacing:0.287px;">[smh@smh-tablet: ~]</div>
<div class="a" style="left:426px;top:777px;width:192px;height:22px;border:1px solid #7d7a75;border-radius:4px;background:linear-gradient(#c1bfbb,#d2d0cc 30%,#d6d4d1);box-shadow:inset 0 1px 2px #9d9a95;"></div>
<div class="t " style="left:457px;top:780px;letter-spacing:0.165px;">New_version_4.2a-ch...</div>
<div class="a" style="left:621px;top:777px;width:193px;height:22px;border:1px solid #8e8b86;border-radius:4px;background:linear-gradient(#ffffff,#f6f5f4 50%,#e6e4e1);"></div>
<div class="t " style="left:651.5px;top:780px;letter-spacing:0.021px;">Old version 3.5a.jpg</div>
<div class="a" style="left:1146px;top:777px;width:133px;height:22px;background:#a9a5a0;border-radius:3px;"></div>
<div class="a" style="left:1146px;top:777px;width:34px;height:22px;background:#cfe0f5;border:1px solid #fbfdff;border-top:1px solid #4f6e9f;border-radius:3px 0 0 3px;"></div>
<div class="a" style="left:1212px;top:777px;width:1px;height:22px;background:#f4f3f1;"></div>
<div class="a" style="left:1245px;top:777px;width:1px;height:22px;background:#f4f3f1;"></div>
<svg style="left:0;top:0" width="1" height="1"><path d="M18.60 23.40 C17.95 23.02 15.88 22.30 14.70 21.10 C13.52 19.90 12.25 18.10 11.50 16.20 C10.75 14.30 10.05 11.55 10.20 9.70 C10.35 7.85 11.27 6.35 12.40 5.10 C13.53 3.85 15.58 2.73 17.00 2.20 C18.42 1.67 19.55 1.63 20.90 1.90 C22.25 2.17 24.05 2.93 25.10 3.80 C26.15 4.67 26.85 6.07 27.20 7.10 C27.55 8.13 27.43 9.07 27.20 10.00 C26.97 10.93 26.47 11.93 25.80 12.70 C25.13 13.47 24.02 14.13 23.20 14.60 C22.38 15.07 21.67 15.50 20.90 15.50 C20.13 15.50 19.20 15.13 18.60 14.60 C18.00 14.07 17.57 13.07 17.30 12.30 C17.03 11.53 16.88 10.70 17.00 10.00 C17.12 9.30 17.52 8.55 18.00 8.10 C18.48 7.65 19.32 7.40 19.90 7.30 C20.48 7.20 21.23 7.47 21.50 7.50" fill="none" stroke="#d40a50" stroke-width="1.25" stroke-linecap="round"/><path d="M10.20 9.70 C10.57 8.93 11.27 6.35 12.40 5.10 C13.53 3.85 15.58 2.73 17.00 2.20 C18.42 1.67 19.55 1.63 20.90 1.90 C22.25 2.17 24.05 2.93 25.10 3.80 C26.15 4.67 26.85 6.07 27.20 7.10 C27.55 8.13 27.20 9.52 27.20 10.00" fill="none" stroke="#d40a50" stroke-width="2.1" stroke-linecap="round"/><path d="M14.70 21.10 C14.17 20.28 12.25 18.10 11.50 16.20 C10.75 14.30 10.05 11.55 10.20 9.70 C10.35 7.85 12.03 5.87 12.40 5.10" fill="none" stroke="#d40a50" stroke-width="1.7" stroke-linecap="round"/></svg>
<svg style="left:239px;top:3px" width="22" height="18" viewBox="0 0 22 18"><rect x="0.5" y="0.5" width="21" height="17" rx="1.5" fill="#d9d7d3" stroke="#55534f"/><rect x="2.5" y="2.5" width="17" height="12" fill="#1c1f1c" stroke="#3a3936"/><rect x="0.8" y="15.4" width="20.4" height="1.6" fill="#8d8b87"/><path d="M5 5.5 l2.2 1.6 l-2.2 1.6 M8 9.8 h3" stroke="#e8e8e8" stroke-width="1.1" fill="none"/><path d="M13 3 L19 3 L19 8 L9 14 Z" fill="#fff" fill-opacity="0.12"/></svg>
<svg style="left:269px;top:3px" width="22" height="18" viewBox="0 0 22 18"><rect x="0.5" y="0.5" width="21" height="17" rx="1.5" fill="#d9d7d3" stroke="#55534f"/><rect x="2.5" y="2.5" width="17" height="12" fill="#1c1f1c" stroke="#3a3936"/><rect x="0.8" y="15.4" width="20.4" height="1.6" fill="#8d8b87"/><path d="M3 9.5 h3 l1.2 -3.5 l1.6 6 l1.8 -8 l1.6 7 l1.4 -3.5 l1 2 h3.4" stroke="#6fe03a" stroke-width="1.3" fill="none" stroke-linejoin="round"/><rect x="3" y="3" width="16" height="11" fill="#2f7a1c" fill-opacity="0.35"/></svg>
<svg style="left:0;top:0" width="1" height="1"><defs><linearGradient id="ch315r" x1="0" y1="0" x2="0" y2="1"><stop offset="0" stop-color="#ee5a4a"/><stop offset="1" stop-color="#d23a2e"/></linearGradient></defs><path d="M310.90 14.37 L306.32 6.45 A10.3 10.3 0 0 1 324.15 7.26 L315.00 7.26 L315 12 Z" fill="url(#ch315r)"/><path d="M315.00 7.26 L324.15 7.26 A10.3 10.3 0 0 1 314.53 22.29 L319.10 14.37 L315 12 Z" fill="#fdd22f"/><path d="M319.10 14.37 L314.53 22.29 A10.3 10.3 0 0 1 306.32 6.45 L310.90 14.37 L315 12 Z" fill="#3cab4e"/><circle cx="315" cy="12" r="4.738" fill="#f4f6f8"/><circle cx="315" cy="12" r="3.7904" fill="#3f84e4"/></svg>
<svg style="left:328px;top:0.6px" width="22" height="22" viewBox="0 0 22 22"><path d="M2 3.2 H20 L21.6 9.8 H0.4 Z" fill="#ecebe8" stroke="#9a9894" stroke-width="0.8" stroke-linejoin="round"/><path d="M3 4.4 H19.4" stroke="#f0827a" stroke-width="1" stroke-dasharray="1 1.7"/><path d="M1.6 8.8 H20.6" stroke="#e63a34" stroke-width="1.7" stroke-dasharray="1.5 1.2"/><path d="M0.8 1.8 q0.4 -1.2 1.6 -1.4 M21.2 1.8 q-0.4 -1.2 -1.6 -1.4" stroke="#3a7be0" stroke-width="1" fill="none"/><path d="M6.6 11.2 q4.4 -1.4 8.6 0.2 q-4.4 2 -8.4 1 q4.2 -0.4 8 1.4 q-4 2 -7.6 1 q3.8 -0.2 7 1.4 q-3.2 1.8 -6.2 1 q0.6 2.2 4.6 2.4 q2 -0.4 0.6 -1.6" stroke="#3c3c3a" stroke-width="1.2" fill="none" stroke-linecap="round"/><ellipse cx="11" cy="20.6" rx="7.5" ry="1.3" fill="#000" fill-opacity="0.08"/></svg>
<svg style="left:353px;top:1px" width="22" height="22" viewBox="0 0 22 22"><path d="M1 9 L9.5 1 L18.5 9 V19.5 H1 Z" fill="#f3f2f0" stroke="#8a8884" stroke-width="0.9" stroke-linejoin="round"/><path d="M1 9 L9.5 14.5 L18.5 9 M1 19.5 L7.5 13 M18.5 19.5 L12 13" fill="none" stroke="#a3a19c" stroke-width="0.8"/><path d="M3.5 8 L9.5 3 L15.8 8 L9.5 12.4Z" fill="#fff" stroke="#c8c6c2" stroke-width="0.6"/><circle cx="15.3" cy="15.8" r="5.2" fill="#f1ecf5" stroke="#8b5aa8" stroke-width="1.3"/><path d="M14 13.5 l1.8 2.3 l-1.8 2.2" fill="none" stroke="#a88abf" stroke-width="1"/></svg>
<svg style="left:0;top:0" width="1" height="1"><path d="M944 4 V21 M947 5.5 V21" stroke="#b5b2ad" stroke-width="1.2" stroke-dasharray="1.2 1.9"/></svg>
<svg style="left:951px;top:0px" width="22" height="23" viewBox="0 0 22 23"><defs><radialGradient id="sg" cx="0.5" cy="0.4" r="0.6"><stop offset="0" stop-color="#ffc36a"/><stop offset="0.7" stop-color="#f08a1c"/><stop offset="1" stop-color="#d96d0a"/></radialGradient></defs><path d="M11.00 0.70 L13.91 4.48 L18.64 3.86 L18.02 8.59 L21.80 11.50 L18.02 14.41 L18.64 19.14 L13.91 18.52 L11.00 22.30 L8.09 18.52 L3.36 19.14 L3.98 14.41 L0.20 11.50 L3.98 8.59 L3.36 3.86 L8.09 4.48 Z" fill="url(#sg)" stroke="#c96208" stroke-width="0.8" stroke-linejoin="round"/><path d="M11 6.6 L15 11 H12.8 V15 H9.2 V11 H7 Z" fill="#fff" fill-opacity="0.95"/></svg>
<svg style="left:975px;top:3.6px" width="17" height="17" viewBox="0 0 17 17"><path d="M4.2 0.6 L8.2 3.4 L4.2 6.2 L0.2 3.4Z M12.2 0.6 L16.2 3.4 L12.2 6.2 L8.2 3.4Z M4.2 6.2 L8.2 9 L4.2 11.8 L0.2 9Z M12.2 6.2 L16.2 9 L12.2 11.8 L8.2 9Z" fill="#3585dc" stroke="#2f7ad4" stroke-width="0.5" stroke-linejoin="round"/><path d="M4.2 12.6 L8.2 9.9 L12.2 12.6 L8.2 15.2Z" fill="#3585dc"/><path d="M4.2 0.9 L7.6 3.4 L4.2 5.8 M12.2 0.9 L15.6 3.4" fill="none" stroke="#8fc0f4" stroke-width="0.6"/><circle cx="11.6" cy="12.4" r="3.9" fill="#e02a2a" stroke="#a81010" stroke-width="0.7"/><path d="M9.65 10.45 L13.55 14.35 M13.55 10.45 L9.65 14.35" stroke="#fff" stroke-width="1.7" stroke-linecap="square"/></svg>
<svg style="left:993px;top:1px" width="22" height="21" viewBox="0 0 22 21"><rect x="0.7" y="0.7" width="20.6" height="15" rx="1.5" fill="#eeece9" stroke="#8a8884" stroke-width="1"/><rect x="2.8" y="2.8" width="16.4" height="10.6" fill="#3c3f3c"/><path d="M11 3 L19 3 L19 10 Z" fill="#fff" fill-opacity="0.15"/><path d="M7 16 h8 l1.5 3 h-11z" fill="#dedcd8" stroke="#9a9894" stroke-width="0.6"/><rect x="4" y="18.6" width="14" height="1.6" rx="0.8" fill="#cfcdc9" stroke="#9a9894" stroke-width="0.5"/><path d="M2.6 1.6 L2.6 13.6 L14.2 13.6 Z" fill="#e8c62a" stroke="#b8960a" stroke-width="0.8" stroke-linejoin="round"/><path d="M4.6 6.8 L4.6 11.6 L9.2 11.6 Z" fill="#f4e27a" stroke="#b8960a" stroke-width="0.5"/></svg>
<svg style="left:1022px;top:3px" width="19" height="20" viewBox="0 0 19 20"><defs><linearGradient id="bg1" x1="0" y1="0" x2="1" y2="1"><stop offset="0" stop-color="#4f86d8"/><stop offset="1" stop-color="#1c4fa8"/></linearGradient></defs><ellipse cx="7.2" cy="9.5" rx="6.8" ry="9" fill="url(#bg1)" stroke="#1a408a" stroke-width="0.8"/><path d="M4 6 L10 12.4 L7 15 V4 L10 6.6 L4 13" fill="none" stroke="#fff" stroke-width="0.95" stroke-linejoin="round"/><rect x="9.6" y="11.2" width="8" height="8" rx="1.2" fill="#e01818" stroke="#a80c0c" stroke-width="0.7"/><path d="M11.6 13.2 L15.6 17.2 M15.6 13.2 L11.6 17.2" stroke="#fff" stroke-width="1.7" stroke-linecap="square"/></svg>
<svg style="left:1045px;top:4.5px" width="18" height="16" viewBox="0 0 18 16"><rect x="0.5" y="10.5" width="3.4" height="5" fill="#3a6fc0" stroke="#1d3f7a" stroke-width="0.8"/><rect x="1.1" y="11.1" width="1.2" height="3.8" fill="#8db3ea"/><rect x="4.8" y="7" width="3.4" height="8.5" fill="#3a6fc0" stroke="#1d3f7a" stroke-width="0.8"/><rect x="5.4" y="7.6" width="1.2" height="7.3" fill="#8db3ea"/><rect x="9.1" y="3.5" width="3.4" height="12" fill="#3a6fc0" stroke="#1d3f7a" stroke-width="0.8"/><rect x="9.7" y="4.1" width="1.2" height="10.8" fill="#8db3ea"/><rect x="13.4" y="0.5" width="3.4" height="15" fill="#3a6fc0" stroke="#1d3f7a" stroke-width="0.8"/><rect x="14" y="1.1" width="1.2" height="13.8" fill="#8db3ea"/></svg>
<svg style="left:1067px;top:0.6px" width="22" height="22" viewBox="0 0 22 22"><defs><linearGradient id="bat" x1="0" y1="0" x2="1" y2="0"><stop offset="0" stop-color="#2a4f96"/><stop offset="0.3" stop-color="#5f8fdc"/><stop offset="0.6" stop-color="#7aa8ea"/><stop offset="1" stop-color="#2a55a4"/></linearGradient></defs><rect x="4" y="0.8" width="5" height="2.4" fill="#e4e2de" stroke="#8a8884" stroke-width="0.7"/><rect x="0.6" y="2.8" width="12" height="16.4" rx="1.2" fill="#f1f0ee" stroke="#8a8884" stroke-width="0.9"/><rect x="2.2" y="4.6" width="8.8" height="13" fill="url(#bat)"/><path d="M18.2 7.4 V13" stroke="#a5a39f" stroke-width="1.6" stroke-linecap="round"/><path d="M12.4 12.4 Q12.4 11.4 13.6 11.4 H19.4 Q20.6 11.4 20.6 12.6 V16 Q21.6 16 21.6 17 V18.6 H10.6 V17 Q10.6 16 12.4 16 Z" fill="#efeeec" stroke="#9a9894" stroke-width="0.8" stroke-linejoin="round"/><rect x="12.2" y="18.4" width="2.2" height="3" fill="#d8d6d2" stroke="#9a9894" stroke-width="0.5"/><rect x="17.6" y="18.4" width="2.2" height="3" fill="#d8d6d2" stroke="#9a9894" stroke-width="0.5"/></svg>
<svg style="left:1228px;top:2px" width="22" height="21" viewBox="0 0 22 21"><defs><linearGradient id="vg" x1="0" y1="0" x2="1" y2="0"><stop offset="0" stop-color="#8a8884"/><stop offset="0.5" stop-color="#e4e2de"/><stop offset="1" stop-color="#777571"/></linearGradient></defs><path d="M0.6 6.5 h2.6 L8 1 V19 L3.2 13.5 H0.6 Z" fill="url(#vg)" stroke="#6a6864" stroke-width="0.8" stroke-linejoin="round"/><path d="M8.6 1 V19" stroke="#55534f" stroke-width="1.6"/><rect x="12.6" y="5.6" width="8" height="8" rx="1" fill="#bdbbb6" stroke="#777571" stroke-width="0.9"/><path d="M14.6 7.6 l4 4 M18.6 7.6 l-4 4" stroke="#4a4844" stroke-width="1.8"/><ellipse cx="6" cy="20" rx="6" ry="0.9" fill="#000" fill-opacity="0.15"/></svg>
<svg style="left:1257px;top:5px" width="16" height="14" viewBox="0 0 16 14"><path d="M1 3.2 L7.6 1 L15.2 2.4 L14.6 10.4 L7.6 13.6 L1.8 10.8 Z" fill="#a8d8f4" fill-opacity="0.8"/><path d="M1 3.2 L6.6 4.8 L7.6 13.6 L1.8 10.8Z" fill="#5a9cc8" fill-opacity="0.85"/><path d="M1 3.2 L7.6 1 L15.2 2.4 L6.6 4.8 Z" fill="#e4f4fc" fill-opacity="0.9"/><path d="M6.6 4.8 L15.2 2.4 L14.6 10.4 L7.6 13.6 Z" fill="#8ccaf4" fill-opacity="0.7"/><circle cx="11.2" cy="7.6" r="3.3" fill="#1a36b0"/><circle cx="10.3" cy="7.3" r="2.9" fill="#1a78ec"/><circle cx="9.3" cy="7.3" r="2.3" fill="#22d0e0"/><circle cx="8.5" cy="7.4" r="1.8" fill="#5adc5a"/><circle cx="7.7" cy="7.5" r="1.25" fill="#fbe332"/><circle cx="4" cy="8.6" r="1" fill="#e8d040"/><path d="M6.6 4.8 L7.6 13.6 M1 3.2 L6.6 4.8 L15.2 2.4" fill="none" stroke="#f4fbff" stroke-width="0.8" stroke-opacity="0.9"/></svg>
<svg style="left:4px;top:30px" width="16" height="14" viewBox="0 0 16 14"><path d="M1 3.2 L7.6 1 L15.2 2.4 L14.6 10.4 L7.6 13.6 L1.8 10.8 Z" fill="#a8d8f4" fill-opacity="0.8"/><path d="M1 3.2 L6.6 4.8 L7.6 13.6 L1.8 10.8Z" fill="#5a9cc8" fill-opacity="0.85"/><path d="M1 3.2 L7.6 1 L15.2 2.4 L6.6 4.8 Z" fill="#e4f4fc" fill-opacity="0.9"/><path d="M6.6 4.8 L15.2 2.4 L14.6 10.4 L7.6 13.6 Z" fill="#8ccaf4" fill-opacity="0.7"/><circle cx="11.2" cy="7.6" r="3.3" fill="#1a36b0"/><circle cx="10.3" cy="7.3" r="2.9" fill="#1a78ec"/><circle cx="9.3" cy="7.3" r="2.3" fill="#22d0e0"/><circle cx="8.5" cy="7.4" r="1.8" fill="#5adc5a"/><circle cx="7.7" cy="7.5" r="1.25" fill="#fbe332"/><circle cx="4" cy="8.6" r="1" fill="#e8d040"/><path d="M6.6 4.8 L7.6 13.6 M1 3.2 L6.6 4.8 L15.2 2.4" fill="none" stroke="#f4fbff" stroke-width="0.8" stroke-opacity="0.9"/></svg>
<svg style="left:1215px;top:28px" width="18" height="18" viewBox="0 0 18 18"><rect x="0.5" y="0.5" width="17" height="17" rx="3.2" fill="#fff" fill-opacity="0.10" stroke="#3f5f92" stroke-width="1"/><rect x="1.5" y="1.5" width="15" height="15" rx="2.4" fill="none" stroke="#fff" stroke-opacity="0.28" stroke-width="1"/><rect x="4.6" y="10.8" width="8.6" height="2.2" fill="#fff" stroke="#3f5f92" stroke-width="0.6"/></svg>
<svg style="left:1237px;top:28px" width="18" height="18" viewBox="0 0 18 18"><rect x="0.5" y="0.5" width="17" height="17" rx="3.2" fill="#fff" fill-opacity="0.10" stroke="#3f5f92" stroke-width="1"/><rect x="1.5" y="1.5" width="15" height="15" rx="2.4" fill="none" stroke="#fff" stroke-opacity="0.28" stroke-width="1"/><rect x="6" y="6.2" width="6" height="5.6" fill="none" stroke="#3f5f92" stroke-width="2.6"/><rect x="6" y="6.2" width="6" height="5.6" fill="none" stroke="#fff" stroke-width="1.5"/><path d="M6 7 h6" stroke="#fff" stroke-width="1.6"/></svg>
<svg style="left:1259px;top:28px" width="18" height="18" viewBox="0 0 18 18"><rect x="0.5" y="0.5" width="17" height="17" rx="3.2" fill="#fff" fill-opacity="0.10" stroke="#3f5f92" stroke-width="1"/><rect x="1.5" y="1.5" width="15" height="15" rx="2.4" fill="none" stroke="#fff" stroke-opacity="0.28" stroke-width="1"/><path d="M5.4 5.4 L12.6 12.6 M12.6 5.4 L5.4 12.6" stroke="#3f5f92" stroke-width="3.6" stroke-linecap="round"/><path d="M5.4 5.4 L12.6 12.6 M12.6 5.4 L5.4 12.6" stroke="#fff" stroke-width="2.2" stroke-linecap="round"/></svg>
<div class="a" style="left:12px;top:76px;width:240px;height:32px;background:linear-gradient(#f3f2f1,#e9e7e5);border-bottom:1px solid #c5c2bd;"></div>
<div class="a" style="left:262px;top:76px;width:1018px;height:32px;background:linear-gradient(#f3f2f1,#e9e7e5);border-bottom:1px solid #c5c2bd;"></div>
<div class="a" style="left:6px;top:78px;width:2px;height:28px;background:#fbfbfa;border-right:1px solid #b5b2ad;border-bottom:1px solid #b5b2ad;width:3px;"></div>
<div class="a" style="left:256px;top:78px;width:2px;height:28px;background:#fbfbfa;border-right:1px solid #b5b2ad;border-bottom:1px solid #b5b2ad;width:3px;"></div>
<div class="a" style="left:128px;top:79px;width:1px;height:26px;background:#c9c6c1;"></div>
<div class="a" style="left:129px;top:79px;width:1px;height:26px;background:#fbfbfa;"></div>
<div class="a" style="left:190px;top:79px;width:1px;height:26px;background:#c9c6c1;"></div>
<div class="a" style="left:191px;top:79px;width:1px;height:26px;background:#fbfbfa;"></div>
<div class="a" style="left:302px;top:79px;width:1px;height:26px;background:#c9c6c1;"></div>
<div class="a" style="left:303px;top:79px;width:1px;height:26px;background:#fbfbfa;"></div>
<svg style="left:22px;top:84px" width="12" height="15" viewBox="0 0 12 15"><rect x="1.6" y="1.6" width="8.8" height="11.8" fill="#fff" stroke="#2b5b76" stroke-width="1.3"/></svg>
<svg style="left:47px;top:85px" width="18" height="14" viewBox="0 0 18 14"><path d="M1.6 12.4 V2.4 Q1.6 1.6 2.4 1.6 H11 Q11.8 1.6 11.8 2.4 V5.2" fill="#e9eef2" stroke="#2b5b76" stroke-width="1.3" stroke-linejoin="round"/><path d="M1.6 12.4 L5 5.6 H16.6 L12.6 12.4 Z" fill="#e4eaef" stroke="#2b5b76" stroke-width="1.3" stroke-linejoin="round"/></svg>
<svg style="left:76px;top:84px" width="15" height="15" viewBox="0 0 15 15"><rect x="1.6" y="1.6" width="11.8" height="12" rx="2" fill="#e4eaef" stroke="#2b5b76" stroke-width="1.3"/><rect x="4.4" y="1.6" width="6.2" height="4.8" fill="#fff" stroke="#2b5b76" stroke-width="1.1"/><rect x="4.6" y="10.6" width="5.8" height="2.4" fill="#fff" stroke="#2b5b76" stroke-width="0.9"/></svg>
<svg style="left:103px;top:83px" width="18" height="17" viewBox="0 0 18 17"><rect x="4.6" y="1.6" width="8.8" height="6" fill="#fff" stroke="#2b5b76" stroke-width="1.3"/><rect x="1.6" y="6.4" width="14.8" height="8" rx="2.4" fill="#e4eaef" stroke="#2b5b76" stroke-width="1.3"/><path d="M2.6 12.6 h12.8 M3.6 15.4 h10.8" stroke="#2b5b76" stroke-width="1.2"/><rect x="12.6" y="9.4" width="1.4" height="1.4" fill="#1fc01f"/></svg>
<svg style="left:138px;top:85px" width="17" height="15" viewBox="0 0 17 15"><path d="M7 1.4 L1.4 6 L7 10.4 V7.6 Q12.6 7 13.4 10.6 Q13.4 12.6 11 13.6 Q15.4 12.4 15.2 9 Q14.6 4.4 7 4.4 Z" fill="#e6e5e3" stroke="#c3c1bd" stroke-width="1" stroke-linejoin="round"/></svg>
<svg style="left:165px;top:85px" width="17" height="15" viewBox="0 0 17 15"><g transform="translate(17,0) scale(-1,1)"><path d="M7 1.4 L1.4 6 L7 10.4 V7.6 Q12.6 7 13.4 10.6 Q13.4 12.6 11 13.6 Q15.4 12.4 15.2 9 Q14.6 4.4 7 4.4 Z" fill="#e6e5e3" stroke="#c3c1bd" stroke-width="1" stroke-linejoin="round"/></g></svg>
<svg style="left:200px;top:84px" width="16" height="16" viewBox="0 0 16 16"><rect x="1.4" y="1.4" width="13" height="13" rx="1.6" fill="#dfe8ee" stroke="#2b5b76" stroke-width="1.5"/><rect x="2.8" y="2.8" width="10.2" height="10.2" fill="#f4fafc"/><text x="8" y="12" font-family="DejaVu Sans,sans-serif" font-weight="bold" font-size="10" fill="#18b6c9" text-anchor="middle">?</text></svg>
<svg style="left:228px;top:84px" width="17" height="16" viewBox="0 0 17 16"><rect x="2" y="1" width="10.8" height="9.4" rx="1" fill="#f4fafc" stroke="#2b5b76" stroke-width="1.4"/><path d="M1.4 10.4 L3.6 14.6 H16.2 L12.8 10.4 Z" fill="#b8c6ce" stroke="#2b5b76" stroke-width="1.2" stroke-linejoin="round"/><path d="M3.6 12.2 h10.6" stroke="#e8f0f4" stroke-width="0.9"/><text x="7.4" y="9" font-family="DejaVu Sans,sans-serif" font-weight="bold" font-size="8.5" fill="#18b6c9" text-anchor="middle">?</text></svg>
<svg style="left:272px;top:83px" width="12" height="17" viewBox="0 0 12 17"><rect x="4.6" y="0.8" width="2.6" height="8" fill="#dfe3e6" stroke="#6a7f8f" stroke-width="0.8"/><path d="M1 9 h10 v2.4 h-10z" fill="#c9d3da" stroke="#6a7f8f" stroke-width="0.8"/><path d="M0.8 11.6 h10.4 v4.6 h-10.4z" fill="#2f8fe6"/><path d="M2 12 v2.6 M4 12 v1.6 M6 12 v2.6 M8 12 v1.6 M10 12 v2.6" stroke="#9fd2ff" stroke-width="0.8"/></svg>
<svg style="left:286px;top:89px" width="9" height="6" viewBox="0 0 9 6"><path d="M1 1 L4.4 4.4 L7.8 1" fill="none" stroke="#1a1a1a" stroke-width="1.7"/></svg>
<svg style="left:311px;top:85px" width="18" height="13" viewBox="0 0 18 13"><rect x="1.2" y="1" width="12" height="10.6" rx="1" fill="#eef3f6" stroke="#4a7d9c" stroke-width="1.1"/><path d="M1.2 2.4 h12" stroke="#4a7d9c" stroke-width="1.6"/><rect x="11" y="0.6" width="1.6" height="1.4" fill="#e03030"/><path d="M3.2 4.4 v6" stroke="#8aa9bc" stroke-width="0.8" stroke-dasharray="0.8 0.8"/><path d="M6 5.4 h6 v-2 l4.6 3.4 l-4.6 3.4 v-2 h-6z" fill="#22c4d8" stroke="#0f93a8" stroke-width="0.7" stroke-linejoin="round"/></svg>
<svg style="left:42.5px;top:118.5px" width="16" height="15" viewBox="0 0 16 15"><path d="M0.6 1.6 v4 M0.6 3 H15.4" stroke="#5a7a94" stroke-width="1.1" fill="none"/><rect x="4" y="0.4" width="2.6" height="14.2" fill="#c5d2dc" stroke="#5a7a94" stroke-width="0.8"/><path d="M11.4 3 V11" stroke="#8aa9c8" stroke-width="0.8"/><rect x="10.2" y="10.4" width="2.6" height="3" fill="#1a8af0" stroke="#1060c0" stroke-width="0.6"/></svg>
<svg style="left:15px;top:132.5px" width="9" height="9" viewBox="0 0 9 9"><rect x="2.8" y="0.6" width="5.6" height="4.4" fill="#fff" stroke="#5d5147" stroke-width="1.1"/><rect x="0.6" y="3.6" width="5.6" height="4.4" fill="#fff" stroke="#5d5147" stroke-width="1.1"/></svg>
<svg style="left:11px;top:157px" width="17" height="17" viewBox="0 0 17 17"><rect x="0.6" y="0.6" width="5" height="5" rx="1" fill="#8ae0f0" stroke="#1a9cc4" stroke-width="1"/><rect x="2.4" y="2.4" width="5" height="5" rx="0.6" fill="#d4f4fa" stroke="#1a9cc4" stroke-width="1"/><rect x="9.4" y="9.2" width="5" height="5" rx="1" fill="#8ae0f0" stroke="#1a9cc4" stroke-width="1"/><rect x="11.2" y="11" width="5" height="5" rx="0.6" fill="#d4f4fa" stroke="#1a9cc4" stroke-width="1"/><rect x="4.8" y="4.6" width="5" height="5" rx="1" fill="#f048e0" stroke="#e020d0" stroke-width="1"/><rect x="6.6" y="6.4" width="5" height="5" rx="0.6" fill="#fa70ee" stroke="#e020d0" stroke-width="1"/></svg>
<svg style="left:149px;top:153px" width="14" height="13" viewBox="0 0 14 13"><path d="M6.4 1 L0.8 6.4 L6.4 11.8 V8.6 H12.4 V4.2 H6.4 Z" fill="#a8f4f8" stroke="#1ab8c8" stroke-width="1.2" stroke-linejoin="round"/></svg>
<svg style="left:177px;top:153px" width="14" height="13" viewBox="0 0 14 13"><path d="M7.6 1 L13.2 6.4 L7.6 11.8 V8.6 H1.6 V4.2 H7.6 Z" fill="#e4e6e6" stroke="#c5cccc" stroke-width="1.1" stroke-linejoin="round"/></svg>
<svg style="left:204px;top:153px" width="17" height="12" viewBox="0 0 17 12"><path d="M0 0.6 h5 l-2.5 3z" fill="#1f4f7a"/><path d="M7 1.2 h9.4" stroke="#1f4f7a" stroke-width="1.6"/><path d="M6 4.4 h10.4 M6 7.2 h10.4 M6 10 h10.4" stroke="#2f6890" stroke-width="1.1"/></svg>
<svg style="left:232px;top:152px" width="16" height="14" viewBox="0 0 16 14"><path d="M0.6 0.6 v4.6 l3 -2.3z" fill="#1f4f7a"/><path d="M4 2.9 h10.6" stroke="#1f4f7a" stroke-width="1.5"/><path d="M4.4 8.8 Q9 4.6 13.6 8.8 Q9 13 4.4 8.8Z" fill="#fff" stroke="#55758f" stroke-width="0.9"/><circle cx="9" cy="8.8" r="1.7" fill="#55758f"/></svg>
<svg style="left:260px;top:153px" width="17" height="13" viewBox="0 0 17 13"><rect x="0.4" y="0.5" width="1.8" height="1.8" fill="#7f9cb0"/><path d="M3.6 1.4 h6.4" stroke="#7f9cb0" stroke-width="1.4"/><rect x="0.4" y="3.7" width="1.8" height="1.8" fill="#7f9cb0"/><path d="M3.6 4.6 h6.4" stroke="#7f9cb0" stroke-width="1.4"/><rect x="0.4" y="6.9" width="1.8" height="1.8" fill="#7f9cb0"/><path d="M3.6 7.8 h6.4" stroke="#7f9cb0" stroke-width="1.4"/><rect x="0.4" y="10.1" width="1.8" height="1.8" fill="#7f9cb0"/><path d="M3.6 11 h6.4" stroke="#7f9cb0" stroke-width="1.4"/><rect x="0.2" y="0.3" width="2.4" height="2.4" fill="none" stroke="#1f5878" stroke-width="0.8"/><path d="M13.6 11.6 V1.6 M11.4 4 L13.6 1.4 L15.8 4" fill="none" stroke="#1f5878" stroke-width="1.3"/></svg>
<svg style="left:288px;top:153px" width="17" height="13" viewBox="0 0 17 13"><rect x="0.4" y="0.5" width="1.8" height="1.8" fill="#1f5878"/><path d="M3.6 1.4 h6.4" stroke="#1f5878" stroke-width="1.4"/><rect x="0.4" y="3.7" width="1.8" height="1.8" fill="#1f5878"/><path d="M3.6 4.6 h6.4" stroke="#1f5878" stroke-width="1.4"/><rect x="0.4" y="6.9" width="1.8" height="1.8" fill="#1f5878"/><path d="M3.6 7.8 h6.4" stroke="#1f5878" stroke-width="1.4"/><rect x="0.4" y="10.1" width="1.8" height="1.8" fill="#1f5878"/><path d="M3.6 11 h6.4" stroke="#1f5878" stroke-width="1.4"/><rect x="0.2" y="0.3" width="2.4" height="2.4" fill="none" stroke="#1f5878" stroke-width="0.8"/><path d="M13.6 0.8 V10.8 M11.4 8.4 L13.6 11 L15.8 8.4" fill="none" stroke="#1f5878" stroke-width="1.3"/></svg>
<svg style="left:97px;top:176px" width="16" height="16" viewBox="0 0 16 16"><rect x="4.2" y="-1" width="9" height="7" fill="#e8f4f6" stroke="#5a7f94" stroke-width="1"/><rect x="6" y="1" width="5" height="1.6" fill="#22c4c0"/><rect x="6" y="3.4" width="4" height="1" fill="#7ad8d4"/><path d="M3.4 6 L1 9.4 H12.6 L14 6" fill="#a9b8c2" stroke="#5a7f94" stroke-width="0.9" stroke-linejoin="round"/><path d="M2.2 12 v-1.6 h12 v-4 M7.2 10.4 v1.6 M12.2 10.4 v1.6" fill="none" stroke="#9ab9d8" stroke-width="0.8"/><rect x="1" y="12" width="2.4" height="2.4" fill="#1ab0f0"/><rect x="6" y="12" width="2.4" height="2.4" fill="#22c022"/><rect x="11" y="12" width="2.4" height="2.4" fill="#ff9a1a"/></svg>
<svg style="left:80px;top:199.5px" width="15" height="13" viewBox="0 0 15 13"><defs><linearGradient id="rc" x1="0" y1="1" x2="1" y2="0"><stop offset="0" stop-color="#18c8f8"/><stop offset="0.45" stop-color="#5ad8f0"/><stop offset="0.65" stop-color="#f8d040"/><stop offset="0.85" stop-color="#f86a1a"/><stop offset="1" stop-color="#e81a1a"/></linearGradient></defs><path d="M0.6 1.6 L9.6 0.6 L13.6 3 V11 L4.4 11.6 L0.6 9.4 Z" fill="#1a6ad8" stroke="#1a5ac0" stroke-width="0.9" stroke-linejoin="round"/><path d="M0.9 1.9 L9.4 1 L13 3.1 L4.6 3.6 Z" fill="#d8ecfa"/><path d="M1 2.2 L4.2 3.8 V11 L1 9.2 Z" fill="#3a8ae8"/><path d="M4.8 4 L13.2 3.5 V10.6 L4.8 11.2 Z" fill="url(#rc)"/></svg>
<svg style="left:99.7px;top:222px" width="12" height="15" viewBox="0 0 12 15"><rect x="0.1" y="0.1" width="1.7" height="1.7" fill="#08e4f0"/><rect x="2.48" y="0.1" width="1.7" height="1.7" fill="#08e4f0"/><rect x="4.86" y="0.1" width="1.7" height="1.7" fill="#08d0e4"/><rect x="7.24" y="0.1" width="1.7" height="1.7" fill="#1494c4"/><rect x="9.62" y="0.1" width="1.7" height="1.7" fill="#1494c4"/><rect x="0.1" y="2.52" width="1.7" height="1.7" fill="#08e4f0"/><rect x="2.48" y="2.52" width="1.7" height="1.7" fill="#08d0e4"/><rect x="4.86" y="2.52" width="1.7" height="1.7" fill="#08d0e4"/><rect x="7.24" y="2.52" width="1.7" height="1.7" fill="#1494c4"/><rect x="9.62" y="2.52" width="1.7" height="1.7" fill="#1a62a0"/><rect x="0.1" y="4.94" width="1.7" height="1.7" fill="#08e4f0"/><rect x="2.48" y="4.94" width="1.7" height="1.7" fill="#08d0e4"/><rect x="4.86" y="4.94" width="1.7" height="1.7" fill="#1494c4"/><rect x="7.24" y="4.94" width="1.7" height="1.7" fill="#1494c4"/><rect x="9.62" y="4.94" width="1.7" height="1.7" fill="#1a62a0"/><rect x="0.1" y="7.36" width="1.7" height="1.7" fill="#08d0e4"/><rect x="2.48" y="7.36" width="1.7" height="1.7" fill="#08d0e4"/><rect x="4.86" y="7.36" width="1.7" height="1.7" fill="#1494c4"/><rect x="7.24" y="7.36" width="1.7" height="1.7" fill="#1a62a0"/><rect x="9.62" y="7.36" width="1.7" height="1.7" fill="#1a62a0"/><rect x="0.1" y="9.78" width="1.7" height="1.7" fill="#08d0e4"/><rect x="2.48" y="9.78" width="1.7" height="1.7" fill="#1494c4"/><rect x="4.86" y="9.78" width="1.7" height="1.7" fill="#1494c4"/><rect x="7.24" y="9.78" width="1.7" height="1.7" fill="#1a62a0"/><rect x="9.62" y="9.78" width="1.7" height="1.7" fill="#143f7a"/><rect x="0.1" y="12.2" width="1.7" height="1.7" fill="#08d0e4"/><rect x="2.48" y="12.2" width="1.7" height="1.7" fill="#1494c4"/><rect x="4.86" y="12.2" width="1.7" height="1.7" fill="#1a62a0"/><rect x="7.24" y="12.2" width="1.7" height="1.7" fill="#1a62a0"/><rect x="9.62" y="12.2" width="1.7" height="1.7" fill="#143f7a"/></svg>
<svg style="left:115px;top:243.5px" width="16" height="16" viewBox="0 0 16 16"><path d="M0.5 3.5 L4 0.5 H15.5 V12 L12.5 15.5 H4 L0.5 12 Z" fill="#5a6f86"/><path d="M1 3.4 L4.2 0.9 H14.6 L12 3.4 Z" fill="#35d5f0"/><path d="M0.9 3.8 L3.6 4.6 V14.2 L0.9 11.6 Z" fill="#f4e04a"/><path d="M5.2 1 v2.2 M8.6 1 v2.2 M11.6 1 v2.2" stroke="#5a6f86" stroke-width="0.8"/><path d="M0.9 6.4 l2.7 1.2 M0.9 9 l2.7 1.4" stroke="#5a6f86" stroke-width="0.8"/><rect x="4.5" y="4.3" width="3.1" height="3.1" fill="#f01010"/><rect x="8.4" y="4.3" width="3.1" height="3.1" fill="#f01010"/><rect x="12.3" y="4.3" width="3.1" height="3.1" fill="#f01010"/><rect x="4.5" y="8.2" width="3.1" height="3.1" fill="#f01010"/><rect x="8.4" y="8.2" width="3.1" height="3.1" fill="#f01010"/><rect x="12.3" y="8.2" width="3.1" height="3.1" fill="#f01010"/><rect x="4.5" y="12.1" width="3.1" height="3.1" fill="#f01010"/><rect x="8.4" y="12.1" width="3.1" height="3.1" fill="#f01010"/><rect x="12.3" y="12.1" width="3.1" height="3.1" fill="#f01010"/></svg>
<svg style="left:115px;top:266.5px" width="16" height="16" viewBox="0 0 16 16"><path d="M0.5 3.5 L4 0.5 H15.5 V12 L12.5 15.5 H4 L0.5 12 Z" fill="#5a6f86"/><path d="M1 3.4 L4.2 0.9 H14.6 L12 3.4 Z" fill="#35d5f0"/><path d="M0.9 3.8 L3.6 4.6 V14.2 L0.9 11.6 Z" fill="#f4e04a"/><path d="M5.2 1 v2.2 M8.6 1 v2.2 M11.6 1 v2.2" stroke="#5a6f86" stroke-width="0.8"/><path d="M0.9 6.4 l2.7 1.2 M0.9 9 l2.7 1.4" stroke="#5a6f86" stroke-width="0.8"/><rect x="4.5" y="4.3" width="3.1" height="3.1" fill="#f01010"/><rect x="8.4" y="4.3" width="3.1" height="3.1" fill="#f01010"/><rect x="12.3" y="4.3" width="3.1" height="3.1" fill="#f01010"/><rect x="4.5" y="8.2" width="3.1" height="3.1" fill="#f01010"/><rect x="8.4" y="8.2" width="3.1" height="3.1" fill="#f01010"/><rect x="12.3" y="8.2" width="3.1" height="3.1" fill="#f01010"/><rect x="4.5" y="12.1" width="3.1" height="3.1" fill="#f01010"/><rect x="8.4" y="12.1" width="3.1" height="3.1" fill="#f01010"/><rect x="12.3" y="12.1" width="3.1" height="3.1" fill="#f01010"/></svg>
<svg style="left:115px;top:312.5px" width="16" height="16" viewBox="0 0 16 16"><path d="M0.5 3.5 L4 0.5 H15.5 V12 L12.5 15.5 H4 L0.5 12 Z" fill="#5a6f86"/><path d="M1 3.4 L4.2 0.9 H14.6 L12 3.4 Z" fill="#35d5f0"/><path d="M0.9 3.8 L3.6 4.6 V14.2 L0.9 11.6 Z" fill="#f4e04a"/><path d="M5.2 1 v2.2 M8.6 1 v2.2 M11.6 1 v2.2" stroke="#5a6f86" stroke-width="0.8"/><path d="M0.9 6.4 l2.7 1.2 M0.9 9 l2.7 1.4" stroke="#5a6f86" stroke-width="0.8"/><rect x="4.5" y="4.3" width="3.1" height="3.1" fill="#f01010"/><rect x="8.4" y="4.3" width="3.1" height="3.1" fill="#f01010"/><rect x="12.3" y="4.3" width="3.1" height="3.1" fill="#f01010"/><rect x="4.5" y="8.2" width="3.1" height="3.1" fill="#f01010"/><rect x="8.4" y="8.2" width="3.1" height="3.1" fill="#f01010"/><rect x="12.3" y="8.2" width="3.1" height="3.1" fill="#f01010"/><rect x="4.5" y="12.1" width="3.1" height="3.1" fill="#f01010"/><rect x="8.4" y="12.1" width="3.1" height="3.1" fill="#f01010"/><rect x="12.3" y="12.1" width="3.1" height="3.1" fill="#f01010"/></svg>
<svg style="left:115px;top:335.5px" width="16" height="16" viewBox="0 0 16 16"><path d="M0.5 3.5 L4 0.5 H15.5 V12 L12.5 15.5 H4 L0.5 12 Z" fill="#5a6f86"/><path d="M1 3.4 L4.2 0.9 H14.6 L12 3.4 Z" fill="#35d5f0"/><path d="M0.9 3.8 L3.6 4.6 V14.2 L0.9 11.6 Z" fill="#f4e04a"/><path d="M5.2 1 v2.2 M8.6 1 v2.2 M11.6 1 v2.2" stroke="#5a6f86" stroke-width="0.8"/><path d="M0.9 6.4 l2.7 1.2 M0.9 9 l2.7 1.4" stroke="#5a6f86" stroke-width="0.8"/><rect x="4.5" y="4.3" width="3.1" height="3.1" fill="#f01010"/><rect x="8.4" y="4.3" width="3.1" height="3.1" fill="#f01010"/><rect x="12.3" y="4.3" width="3.1" height="3.1" fill="#f01010"/><rect x="4.5" y="8.2" width="3.1" height="3.1" fill="#f01010"/><rect x="8.4" y="8.2" width="3.1" height="3.1" fill="#f01010"/><rect x="12.3" y="8.2" width="3.1" height="3.1" fill="#f01010"/><rect x="4.5" y="12.1" width="3.1" height="3.1" fill="#f01010"/><rect x="8.4" y="12.1" width="3.1" height="3.1" fill="#f01010"/><rect x="12.3" y="12.1" width="3.1" height="3.1" fill="#f01010"/></svg>
<svg style="left:117px;top:291px" width="14" height="14" viewBox="0 0 14 14"><rect x="0.6" y="0.6" width="12.4" height="12.2" fill="#fff" stroke="#b818d8" stroke-width="1.1"/><circle cx="6.8" cy="6.6" r="2.4" fill="#4a7aaa"/></svg>
<svg style="left:96.5px;top:359px" width="18" height="15" viewBox="0 0 18 15"><path d="M7 13.6 V1.4 M5.4 3 L7 0.8 L8.6 3" fill="none" stroke="#1a6af0" stroke-width="1.2"/><path d="M7 13.6 L1 8.8 M1 11 V8.6 H3.4" fill="none" stroke="#1ab82a" stroke-width="1.2"/><path d="M7 13.6 L16 8 M13.4 7.6 L16.2 7.8 L15 10.4" fill="none" stroke="#f0561a" stroke-width="1.2"/></svg>
<div class="a" style="left:97.4px;top:384.7px;width:22px;height:15px;font-size:8.4px;line-height:7px;font-weight:bold;color:#008a9c;white-space:nowrap;transform:scaleX(0.76);transform-origin:0 0">8.85<br>e-12</div>
<svg style="left:98px;top:406px" width="14" height="14" viewBox="0 0 14 14"><g shape-rendering="crispEdges"><rect x="0.5" y="0.5" width="13" height="13" fill="#fff" stroke="#86a3ba" stroke-width="1"/><rect x="1" y="1" width="12" height="3" fill="#c4f2f9"/><rect x="5" y="4" width="4" height="6" fill="#aaeef8"/><path d="M1 4.5 H13 M1 7.5 H13 M1 10.5 H13 M4.5 1 V13 M9.5 1 V13" stroke="#b4cbda" stroke-width="1" fill="none"/></g></svg>
<svg style="left:98px;top:429px" width="14" height="14" viewBox="0 0 14 14"><defs><radialGradient id="p2429a" cx="0" cy="1" r="1.15"><stop offset="0" stop-color="#4a10ff"/><stop offset="0.3" stop-color="#7a18ff"/><stop offset="0.6" stop-color="#b42cfc"/><stop offset="0.85" stop-color="#d636f8"/><stop offset="1" stop-color="#f438f2"/></radialGradient><radialGradient id="p2429b" cx="0.6" cy="0.1" r="0.36"><stop offset="0" stop-color="#ff2898"/><stop offset="0.6" stop-color="#ff2cc0" stop-opacity="0.7"/><stop offset="1" stop-color="#ff30e8" stop-opacity="0"/></radialGradient></defs><rect x="0.5" y="0.5" width="13" height="13" fill="url(#p2429a)" stroke="#3a04ff" stroke-width="1"/><rect x="1" y="1" width="12" height="9" fill="url(#p2429b)"/></svg>
<svg style="left:98px;top:452px" width="14" height="14" viewBox="0 0 14 14"><defs><radialGradient id="p2452a" cx="0" cy="1" r="1.15"><stop offset="0" stop-color="#4a10ff"/><stop offset="0.3" stop-color="#7a18ff"/><stop offset="0.6" stop-color="#b42cfc"/><stop offset="0.85" stop-color="#d636f8"/><stop offset="1" stop-color="#f438f2"/></radialGradient><radialGradient id="p2452b" cx="0.6" cy="0.1" r="0.36"><stop offset="0" stop-color="#ff2898"/><stop offset="0.6" stop-color="#ff2cc0" stop-opacity="0.7"/><stop offset="1" stop-color="#ff30e8" stop-opacity="0"/></radialGradient></defs><rect x="0.5" y="0.5" width="13" height="13" fill="url(#p2452a)" stroke="#3a04ff" stroke-width="1"/><rect x="1" y="1" width="12" height="9" fill="url(#p2452b)"/></svg>
<svg style="left:98px;top:475px" width="14" height="14" viewBox="0 0 14 14"><defs><radialGradient id="p2475a" cx="0" cy="1" r="1.15"><stop offset="0" stop-color="#4a10ff"/><stop offset="0.3" stop-color="#7a18ff"/><stop offset="0.6" stop-color="#b42cfc"/><stop offset="0.85" stop-color="#d636f8"/><stop offset="1" stop-color="#f438f2"/></radialGradient><radialGradient id="p2475b" cx="0.6" cy="0.1" r="0.36"><stop offset="0" stop-color="#ff2898"/><stop offset="0.6" stop-color="#ff2cc0" stop-opacity="0.7"/><stop offset="1" stop-color="#ff30e8" stop-opacity="0"/></radialGradient></defs><rect x="0.5" y="0.5" width="13" height="13" fill="url(#p2475a)" stroke="#3a04ff" stroke-width="1"/><rect x="1" y="1" width="12" height="9" fill="url(#p2475b)"/></svg>
<svg style="left:98px;top:521px" width="14" height="14" viewBox="0 0 14 14"><defs><radialGradient id="p2521a" cx="0" cy="1" r="1.15"><stop offset="0" stop-color="#4a10ff"/><stop offset="0.3" stop-color="#7a18ff"/><stop offset="0.6" stop-color="#b42cfc"/><stop offset="0.85" stop-color="#d636f8"/><stop offset="1" stop-color="#f438f2"/></radialGradient><radialGradient id="p2521b" cx="0.6" cy="0.1" r="0.36"><stop offset="0" stop-color="#ff2898"/><stop offset="0.6" stop-color="#ff2cc0" stop-opacity="0.7"/><stop offset="1" stop-color="#ff30e8" stop-opacity="0"/></radialGradient></defs><rect x="0.5" y="0.5" width="13" height="13" fill="url(#p2521a)" stroke="#3a04ff" stroke-width="1"/><rect x="1" y="1" width="12" height="9" fill="url(#p2521b)"/></svg>
<svg style="left:98px;top:544px" width="14" height="14" viewBox="0 0 14 14"><defs><radialGradient id="p2544a" cx="0" cy="1" r="1.15"><stop offset="0" stop-color="#4a10ff"/><stop offset="0.3" stop-color="#7a18ff"/><stop offset="0.6" stop-color="#b42cfc"/><stop offset="0.85" stop-color="#d636f8"/><stop offset="1" stop-color="#f438f2"/></radialGradient><radialGradient id="p2544b" cx="0.6" cy="0.1" r="0.36"><stop offset="0" stop-color="#ff2898"/><stop offset="0.6" stop-color="#ff2cc0" stop-opacity="0.7"/><stop offset="1" stop-color="#ff30e8" stop-opacity="0"/></radialGradient></defs><rect x="0.5" y="0.5" width="13" height="13" fill="url(#p2544a)" stroke="#3a04ff" stroke-width="1"/><rect x="1" y="1" width="12" height="9" fill="url(#p2544b)"/></svg>
<svg style="left:98px;top:567px" width="14" height="14" viewBox="0 0 14 14"><defs><radialGradient id="p2567a" cx="0" cy="1" r="1.15"><stop offset="0" stop-color="#4a10ff"/><stop offset="0.3" stop-color="#7a18ff"/><stop offset="0.6" stop-color="#b42cfc"/><stop offset="0.85" stop-color="#d636f8"/><stop offset="1" stop-color="#f438f2"/></radialGradient><radialGradient id="p2567b" cx="0.6" cy="0.1" r="0.36"><stop offset="0" stop-color="#ff2898"/><stop offset="0.6" stop-color="#ff2cc0" stop-opacity="0.7"/><stop offset="1" stop-color="#ff30e8" stop-opacity="0"/></radialGradient></defs><rect x="0.5" y="0.5" width="13" height="13" fill="url(#p2567a)" stroke="#3a04ff" stroke-width="1"/><rect x="1" y="1" width="12" height="9" fill="url(#p2567b)"/></svg>
<svg style="left:96px;top:496.5px" width="17" height="16" viewBox="0 0 17 16"><path d="M2.5 1 V13.5 H15.5" fill="none" stroke="#6b8a96" stroke-width="1"/><path d="M0.8 3 L2.5 0.6 L4.2 3 M13.6 11.9 L15.8 13.5 L13.6 15.1" fill="none" stroke="#6b8a96" stroke-width="0.9"/><defs><linearGradient id="p1496" x1="0" y1="0" x2="1" y2="0"><stop offset="0" stop-color="#2fe01a"/><stop offset="0.55" stop-color="#1fd67a"/><stop offset="1" stop-color="#2ad0b0"/></linearGradient></defs><path d="M3.4 8.6 C4.4 4.4 6.4 3 8 6.2 C9.6 9.8 11.8 11.6 14.4 6.6" fill="none" stroke="url(#p1496)" stroke-width="2.1"/></svg>
<svg style="left:96px;top:588.5px" width="17" height="16" viewBox="0 0 17 16"><path d="M2.5 1 V13.5 H15.5" fill="none" stroke="#6b8a96" stroke-width="1"/><path d="M0.8 3 L2.5 0.6 L4.2 3 M13.6 11.9 L15.8 13.5 L13.6 15.1" fill="none" stroke="#6b8a96" stroke-width="0.9"/><defs><linearGradient id="p1588" x1="0" y1="0" x2="1" y2="0"><stop offset="0" stop-color="#2fe01a"/><stop offset="0.55" stop-color="#1fd67a"/><stop offset="1" stop-color="#2ad0b0"/></linearGradient></defs><path d="M3.4 8.6 C4.4 4.4 6.4 3 8 6.2 C9.6 9.8 11.8 11.6 14.4 6.6" fill="none" stroke="url(#p1588)" stroke-width="2.1"/></svg>
<svg style="left:114px;top:611.5px" width="17" height="16" viewBox="0 0 17 16"><path d="M2.5 1 V13.5 H15.5" fill="none" stroke="#6b8a96" stroke-width="1"/><path d="M0.8 3 L2.5 0.6 L4.2 3 M13.6 11.9 L15.8 13.5 L13.6 15.1" fill="none" stroke="#6b8a96" stroke-width="0.9"/><defs><linearGradient id="p1611" x1="0" y1="0" x2="1" y2="0"><stop offset="0" stop-color="#2fe01a"/><stop offset="0.55" stop-color="#1fd67a"/><stop offset="1" stop-color="#2ad0b0"/></linearGradient></defs><path d="M3.4 8.6 C4.4 4.4 6.4 3 8 6.2 C9.6 9.8 11.8 11.6 14.4 6.6" fill="none" stroke="url(#p1611)" stroke-width="2.1"/><rect x="0.6" y="11.6" width="3.8" height="3.8" fill="#5af03a" stroke="#12a012" stroke-width="0.9"/></svg>
<svg style="left:114px;top:634.5px" width="17" height="16" viewBox="0 0 17 16"><path d="M2.5 1 V13.5 H15.5" fill="none" stroke="#b5b1ab" stroke-width="1"/><path d="M0.8 3 L2.5 0.6 L4.2 3 M13.6 11.9 L15.8 13.5 L13.6 15.1" fill="none" stroke="#b5b1ab" stroke-width="0.9"/><path d="M3.4 8.6 C4.4 4.4 6.4 3 8 6.2 C9.6 9.8 11.8 11.6 14.4 6.6" fill="none" stroke="#b5b1ab" stroke-width="2.6"/><path d="M3.4 8.6 C4.4 4.4 6.4 3 8 6.2 C9.6 9.8 11.8 11.6 14.4 6.6" fill="none" stroke="#f6f5f3" stroke-width="1.2"/><rect x="0.6" y="11.6" width="3.8" height="3.8" fill="#cfccc8" stroke="#a9a59f" stroke-width="0.8"/></svg>
<svg style="left:114px;top:657.5px" width="17" height="16" viewBox="0 0 17 16"><path d="M2.5 1 V13.5 H15.5" fill="none" stroke="#b5b1ab" stroke-width="1"/><path d="M0.8 3 L2.5 0.6 L4.2 3 M13.6 11.9 L15.8 13.5 L13.6 15.1" fill="none" stroke="#b5b1ab" stroke-width="0.9"/><path d="M3.4 8.6 C4.4 4.4 6.4 3 8 6.2 C9.6 9.8 11.8 11.6 14.4 6.6" fill="none" stroke="#b5b1ab" stroke-width="2.6"/><path d="M3.4 8.6 C4.4 4.4 6.4 3 8 6.2 C9.6 9.8 11.8 11.6 14.4 6.6" fill="none" stroke="#f6f5f3" stroke-width="1.2"/><rect x="0.6" y="11.6" width="3.8" height="3.8" fill="#cfccc8" stroke="#a9a59f" stroke-width="0.8"/></svg>
<svg style="left:97px;top:681.5px" width="16" height="14" viewBox="0 0 16 14"><path d="M0.8 1 L10.4 0.8 L15.4 4.4 V12.4 L5.8 12.6 L0.8 8.8 Z" fill="#e8d4a0" stroke="#a67a22" stroke-width="1.1" stroke-linejoin="round"/><path d="M0.8 1 L5.8 4.6 L15.4 4.4 M5.8 4.6 V12.6" fill="none" stroke="#a67a22" stroke-width="1.1"/><path d="M2.4 3 v6 M4 4.2 v6.4" stroke="#a67a22" stroke-width="0.9"/><rect x="7.6" y="6.2" width="6" height="4.8" fill="#f8f0d8" stroke="#a67a22" stroke-width="0.9"/><path d="M9 9.6 h3.2 v-2 h-2" fill="none" stroke="#a67a22" stroke-width="0.9"/><path d="M3.4 1.4 L8.4 4.4 M6.6 1.2 L11.6 4.4" stroke="#a67a22" stroke-width="0.8"/></svg>
<svg style="left:97.5px;top:703.5px" width="17" height="17" viewBox="0 0 17 17"><path d="M0.8 0.8 H7.4 L8 1.6 L8.6 0.8 H15 V12.2 H8.6 L8 13 L7.4 12.2 H0.8 Z" fill="#f4f8fa" stroke="#5a7a94" stroke-width="1.1" stroke-linejoin="round"/><path d="M8 1.6 V12.6" stroke="#5a7a94" stroke-width="0.9"/><path d="M2.4 3.4 h3.8 M2.4 5.4 h3.8 M2.4 7.4 h3.8 M9.8 3.4 h3.8 M9.8 5.4 h3.8 M9.8 7.4 h3.8" stroke="#8ac8e8" stroke-width="0.8"/><path d="M3.4 4 L10 10.4" stroke="#5a7a94" stroke-width="1"/><path d="M9.4 9 L12.2 8.6 L15.4 13 Q15.4 15.6 13 15.2 L9.8 11.6 Z" fill="#fff" stroke="#5a7a94" stroke-width="1" stroke-linejoin="round"/></svg>
<svg style="left:321px;top:118px" width="16" height="16" viewBox="0 0 16 16"><rect x="0.5" y="0.5" width="15" height="15" rx="2" fill="#d3dfea" stroke="#8eaac4" stroke-width="1"/><rect x="2" y="2.4" width="2.4" height="2.2" fill="#2fd82f"/><rect x="6.6" y="2.4" width="2.4" height="2.2" fill="#2fd82f"/><rect x="11.4" y="2.4" width="2.4" height="2.2" fill="#ff8a1a"/><path d="M3.2 6 V14 M7.8 6 V14 M12.6 6 V14" stroke="#f4f8fb" stroke-width="2.4"/><path d="M3.2 9 V14 M7.8 9 V14 M12.6 6 V11" stroke="#3f607f" stroke-width="1.2"/><circle cx="3.2" cy="9.6" r="1.5" fill="#7f9ab4" stroke="#3f607f" stroke-width="1"/><circle cx="7.8" cy="9.6" r="1.5" fill="#7f9ab4" stroke="#3f607f" stroke-width="1"/><circle cx="12.6" cy="11" r="1.5" fill="#7f9ab4" stroke="#3f607f" stroke-width="1"/></svg>
<svg style="left:419px;top:119px" width="14" height="14" viewBox="0 0 14 14"><rect x="0.4" y="0.4" width="12.6" height="13.4" fill="#4f6f8a"/><rect x="1.2" y="1.2" width="2.2" height="11.8" fill="#10a8dc"/><rect x="1.2" y="10.6" width="2.2" height="2.4" fill="#18e0e8"/><rect x="1.8" y="1.4" width="1" height="6" fill="#fff"/><rect x="4.2" y="1.2" width="2.2" height="11.8" fill="#10a8dc"/><rect x="4.2" y="10.6" width="2.2" height="2.4" fill="#18e0e8"/><rect x="4.8" y="1.4" width="1" height="4.4" fill="#fff"/><rect x="7.2" y="1.2" width="2.2" height="11.8" fill="#10a8dc"/><rect x="7.2" y="10.6" width="2.2" height="2.4" fill="#18e0e8"/><rect x="7.8" y="1.4" width="1" height="6" fill="#fff"/><rect x="10.2" y="1.2" width="2.2" height="11.8" fill="#10a8dc"/><rect x="10.2" y="10.6" width="2.2" height="2.4" fill="#18e0e8"/><rect x="10.8" y="1.4" width="1" height="4.4" fill="#fff"/></svg>
<svg style="left:521.5px;top:118.5px" width="14" height="14" viewBox="0 0 14 14"><path d="M4.6 0.6 H9.4 V2.4 H12.4 V4.4 H13.6 V9.2 H12.4 V11.4 H9.4 V13 H4.6 V11.4 H1.6 V9.2 H0.4 V4.4 H1.6 V2.4 H4.6 Z" fill="#22b8dc" stroke="#1898c0" stroke-width="0.6"/><rect x="2.2" y="2.2" width="2.6" height="2.6" fill="#22d822"/><rect x="5.8" y="2.2" width="2.6" height="2.6" fill="#22e8e8"/><rect x="9.4" y="2.2" width="2.6" height="2.6" fill="#f028e8"/><rect x="2.2" y="5.6" width="2.6" height="2.6" fill="#f8e018"/><rect x="5.8" y="5.6" width="2.6" height="2.6" fill="#ff8a1a"/><rect x="9.4" y="5.6" width="2.6" height="2.6" fill="#f028e8"/><rect x="2.2" y="9" width="2.6" height="2.6" fill="#f8e018"/><rect x="5.8" y="9" width="2.6" height="2.6" fill="#ff2a6a"/><rect x="9.4" y="9" width="2.6" height="2.6" fill="#f028e8"/><rect x="5.8" y="0.9" width="2.6" height="1.4" fill="#8af0f8"/><rect x="5.8" y="11.6" width="2.6" height="1.2" fill="#ff2a6a"/></svg>
<svg style="left:616.5px;top:151.3px" width="17" height="14" viewBox="0 0 17 14"><path d="M0 6.2 L7.4 12.2 V12.6 H0 Z" fill="#f8281a"/><path d="M0 8.6 L5.2 12.4 H0 Z" fill="#ff9018"/><path d="M0 10.4 L3.6 12.4 H0 Z" fill="#f8e420"/><rect x="0" y="11.8" width="7.2" height="1.8" fill="#10e4f8"/><path d="M8 12.2 L9 9.2 L15.4 1 L16.6 1.4 L16.6 4.6 L10.4 11 Z" fill="#fafafa" stroke="#8a8a8a" stroke-width="0.7" stroke-linejoin="round"/><path d="M11.4 6 L15.4 1 L16.6 1.4 L16.6 4.6 L13 8.4 Z" fill="#2a8cd4"/><path d="M12.4 6.6 L15.8 2.4 M13.6 7.2 L16.2 4" stroke="#e4f2fc" stroke-width="0.6"/><path d="M7.2 13.2 L8.6 9.8 L10 11.4 Z" fill="#1a8cf0"/></svg>
<svg style="left:651px;top:151.5px" width="17" height="16" viewBox="0 0 17 16"><rect x="1.8" y="0.8" width="10.6" height="9" rx="1" fill="#f4fafc" stroke="#2b5b76" stroke-width="1.4"/><path d="M1.2 9.8 L3.4 14 H16 L12.6 9.8 Z" fill="#b8c6ce" stroke="#2b5b76" stroke-width="1.2" stroke-linejoin="round"/><path d="M3.4 11.6 h10.6" stroke="#e8f0f4" stroke-width="0.9"/><text x="7" y="8.4" font-family="DejaVu Sans,sans-serif" font-weight="bold" font-size="8.5" fill="#18b6c9" text-anchor="middle">?</text></svg>
<svg style="left:685px;top:118.5px" width="14" height="15" viewBox="0 0 14 15"><defs><radialGradient id="gi1s" cx="0.35" cy="0.35" r="0.7"><stop offset="0" stop-color="#b8f8fc"/><stop offset="0.5" stop-color="#22c8e0"/><stop offset="1" stop-color="#0a98b8"/></radialGradient><linearGradient id="gi1c" x1="0" y1="0" x2="1" y2="0"><stop offset="0" stop-color="#e8a8e0"/><stop offset="0.5" stop-color="#b868c0"/><stop offset="1" stop-color="#8a4a98"/></linearGradient></defs><path d="M9.6 0.4 L13.8 11 Q10.4 13.2 6.2 11.4 Z" fill="url(#gi1c)"/><circle cx="4.2" cy="10.4" r="4" fill="url(#gi1s)"/></svg>
<svg style="left:784px;top:118.5px" width="14" height="15" viewBox="0 0 14 15"><defs><radialGradient id="gi2s" cx="0.35" cy="0.35" r="0.7"><stop offset="0" stop-color="#b8f8fc"/><stop offset="0.5" stop-color="#22c8e0"/><stop offset="1" stop-color="#0a98b8"/></radialGradient><linearGradient id="gi2c" x1="0" y1="0" x2="1" y2="0"><stop offset="0" stop-color="#e8a8e0"/><stop offset="0.5" stop-color="#b868c0"/><stop offset="1" stop-color="#8a4a98"/></linearGradient></defs><path d="M9.6 0.4 L13.8 11 Q10.4 13.2 6.2 11.4 Z" fill="url(#gi2c)"/><circle cx="4.2" cy="10.4" r="4" fill="url(#gi2s)"/></svg>
<svg style="left:936px;top:118.5px" width="14" height="15" viewBox="0 0 14 15"><defs><radialGradient id="gi3s" cx="0.35" cy="0.35" r="0.7"><stop offset="0" stop-color="#b8f8fc"/><stop offset="0.5" stop-color="#22c8e0"/><stop offset="1" stop-color="#0a98b8"/></radialGradient><linearGradient id="gi3c" x1="0" y1="0" x2="1" y2="0"><stop offset="0" stop-color="#e8a8e0"/><stop offset="0.5" stop-color="#b868c0"/><stop offset="1" stop-color="#8a4a98"/></linearGradient></defs><path d="M9.6 0.4 L13.8 11 Q10.4 13.2 6.2 11.4 Z" fill="url(#gi3c)"/><circle cx="4.2" cy="10.4" r="4" fill="url(#gi3s)"/></svg>
<svg style="left:0;top:0" width="1" height="1"><g opacity="1"><path d="M1079.9 161 L1083.9 165" stroke="#5f7f90" stroke-width="2.2" stroke-linecap="round"/><circle cx="1076.3" cy="157.4" r="4.6" fill="#f8fbfc" stroke="#5f7f90" stroke-width="1.3"/><path d="M1073.8 157.4 h5 M1076.3 154.9 v5" stroke="#4a6a7a" stroke-width="1.1"/></g></svg>
<svg style="left:0;top:0" width="1" height="1"><g opacity="1"><path d="M1107.9 161 L1111.9 165" stroke="#5f7f90" stroke-width="2.2" stroke-linecap="round"/><circle cx="1104.3" cy="157.4" r="4.6" fill="#f8fbfc" stroke="#5f7f90" stroke-width="1.3"/><path d="M1101.8 157.4 h5" stroke="#4a6a7a" stroke-width="1.1"/></g></svg>
<svg style="left:0;top:0" width="1" height="1"><g opacity="0.9"><path d="M1138.6 160.2 L1142.6 164.2" stroke="#9ab0bc" stroke-width="2.2" stroke-linecap="round"/><circle cx="1135" cy="156.6" r="4.6" fill="#f8fbfc" stroke="#9ab0bc" stroke-width="1.3"/><path d="M1132.5 156.6 h5 M1135 154.1 v5" stroke="#4a6a7a" stroke-width="1.1"/></g><rect x="1126.5" y="157.5" width="8" height="7.4" fill="none" stroke="#3f5f70" stroke-width="1.1" stroke-dasharray="2 1.2"/></svg>
<svg style="left:1155px;top:151px" width="15" height="15" viewBox="0 0 15 15"><rect x="0.6" y="0.6" width="13.8" height="13.8" fill="#eef6fa" stroke="#6a9ab4" stroke-width="1.1"/><path d="M7.5 1.6 L9.8 4.2 H5.2Z M7.5 13.4 L9.8 10.8 H5.2Z M1.6 7.5 L4.2 5.2 V9.8Z M13.4 7.5 L10.8 5.2 V9.8Z" fill="#1a98cc"/><path d="M5.4 7.5 h4.2 M7.5 5.4 v4.2" stroke="#3f6f8a" stroke-width="1.1"/></svg>
<svg style="left:1188px;top:151px" width="16" height="16" viewBox="0 0 16 16"><path d="M1.6 0.4 V13" stroke="#2b5b76" stroke-width="1.2"/><path d="M0 14.6 H16" stroke="#2b5b76" stroke-width="1" stroke-dasharray="1 2"/><path d="M0.4 2 V12" stroke="#2b5b76" stroke-width="0.8" stroke-dasharray="1 2.4"/><path d="M1.6 12.6 H15.4" stroke="#8ab0c0" stroke-width="0.8"/><path d="M7 0.4 V12.4 M10 0.4 V12.4 M12.4 0.4 V12.4 M15 0.4 V12.4" stroke="#12dff0" stroke-width="1.2"/></svg>
<svg style="left:1216px;top:151px" width="16" height="16" viewBox="0 0 16 16"><path d="M1.6 0.4 V13" stroke="#2b5b76" stroke-width="1.2"/><path d="M0 14.6 H16" stroke="#2b5b76" stroke-width="1" stroke-dasharray="1 2"/><path d="M0.4 2 V12" stroke="#2b5b76" stroke-width="0.8" stroke-dasharray="1 2.4"/><path d="M2.4 1.2 H15.8 M2.4 4.6 H15.8 M2.4 8 H15.8 M2.4 11.4 H15.8" stroke="#12dff0" stroke-width="1.3"/></svg>
<svg style="left:1250px;top:153px" width="16" height="12" viewBox="0 0 16 12"><path d="M0.6 2.8 H4 L5 0.8 H10.6 L11.6 2.8 H15.4 V11.4 H0.6 Z" fill="#77777a" stroke="#55555a" stroke-width="0.9" stroke-linejoin="round"/><circle cx="8" cy="6.8" r="3.6" fill="#9a9a9e" stroke="#3a3a3e" stroke-width="1"/><circle cx="8" cy="6.8" r="1.8" fill="#4a4a50"/><circle cx="7.2" cy="6" r="0.7" fill="#d8d8dc"/><rect x="1.6" y="4" width="2" height="6.4" fill="#aaaaae"/></svg>
<svg style="left:684px;top:552px" width="15" height="11" viewBox="0 0 15 11"><rect x="0.5" y="0.5" width="14" height="9.6" fill="#f4f8fb" stroke="#8aa9c2" stroke-width="1"/><path d="M0.8 0.8 L7.5 6.4 L14.2 0.8 M0.8 9.8 L5.6 5 M14.2 9.8 L9.4 5" fill="none" stroke="#a9c2d6" stroke-width="0.9"/></svg>
<svg style="left:776px;top:554px" width="16" height="6" viewBox="0 0 16 6"><rect x="0.5" y="0.5" width="15" height="5" rx="1.2" fill="#f4f6fa" stroke="#8aa9d2" stroke-width="1"/><rect x="1.4" y="1.2" width="8" height="3.6" fill="#8fd400"/><path d="M3.4 1.2 v3.6 M5.4 1.2 v3.6 M7.4 1.2 v3.6 M11.4 1.2 v3.6 M13.4 1.2 v3.6" stroke="#c8e070" stroke-width="0.5"/><rect x="9.6" y="1.2" width="5" height="3.6" fill="#dfe6f0"/></svg>
<svg style="left:875px;top:550px" width="15" height="13" viewBox="0 0 15 13"><rect x="0.5" y="0.5" width="14" height="12" fill="#fbfdfe" stroke="#8aa9c2" stroke-width="1"/><rect x="2.6" y="2.6" width="2.2" height="1" fill="#7fa0bc"/><rect x="6.4" y="2.6" width="1.2" height="1" fill="#7fa0bc"/><rect x="10.2" y="2.6" width="2.2" height="1" fill="#7fa0bc"/><rect x="2.6" y="5" width="2.2" height="1" fill="#7fa0bc"/><rect x="6.4" y="5" width="1.2" height="1" fill="#7fa0bc"/><rect x="10.2" y="5" width="2.2" height="1" fill="#7fa0bc"/><rect x="2.6" y="7.4" width="2.2" height="1" fill="#7fa0bc"/><rect x="6.4" y="7.4" width="1.2" height="1" fill="#7fa0bc"/><rect x="10.2" y="7.4" width="2.2" height="1" fill="#7fa0bc"/><rect x="2.6" y="9.8" width="2.2" height="1" fill="#7fa0bc"/><rect x="6.4" y="9.8" width="1.2" height="1" fill="#7fa0bc"/><rect x="10.2" y="9.8" width="2.2" height="1" fill="#7fa0bc"/></svg>
<svg style="left:928px;top:550px" width="12" height="15" viewBox="0 0 12 15"><rect x="0.5" y="0.5" width="11" height="14" fill="#fbfdfe" stroke="#8aa9c2" stroke-width="1"/><rect x="2" y="2.2" width="1.2" height="1.2" fill="#1a98e8"/><rect x="4.2" y="2.3" width="5.6" height="1" fill="#8aa9bc"/><rect x="2" y="4.2" width="1.2" height="1.2" fill="#1a98e8"/><rect x="4.2" y="4.3" width="4.2" height="1" fill="#8aa9bc"/><rect x="2" y="6.2" width="1.2" height="1.2" fill="#1a98e8"/><rect x="4.2" y="6.3" width="5.6" height="1" fill="#8aa9bc"/><rect x="2" y="8.2" width="1.2" height="1.2" fill="#1a98e8"/><rect x="4.2" y="8.3" width="4.2" height="1" fill="#8aa9bc"/><rect x="2" y="10.2" width="1.2" height="1.2" fill="#1a98e8"/><rect x="4.2" y="10.3" width="5.6" height="1" fill="#8aa9bc"/><rect x="2" y="12.2" width="1.2" height="1.2" fill="#1a98e8"/><rect x="4.2" y="12.3" width="4.2" height="1" fill="#8aa9bc"/></svg>
<svg style="left:1165px;top:551px" width="17" height="12" viewBox="0 0 17 12"><rect x="0.6" y="0.6" width="12" height="10" rx="1" fill="#eef3f6" stroke="#6a9ab4" stroke-width="1"/><path d="M0.6 2 h12" stroke="#6a9ab4" stroke-width="1.4"/><rect x="11.2" y="0.4" width="1.4" height="1.2" fill="#e03030"/><path d="M2.6 3.6 v6.4" stroke="#8aa9bc" stroke-width="0.8"/><path d="M15.4 5.4 h-5 v-2 l-4.4 3.2 l4.4 3.2 v-2 h5z" fill="#4ae04a" stroke="#12a012" stroke-width="0.8" stroke-linejoin="round"/></svg>
<svg style="left:1199px;top:548.7px" width="17" height="14" viewBox="0 0 17 14"><path d="M0 6.2 L7.4 12.2 V12.6 H0 Z" fill="#f8281a"/><path d="M0 8.6 L5.2 12.4 H0 Z" fill="#ff9018"/><path d="M0 10.4 L3.6 12.4 H0 Z" fill="#f8e420"/><rect x="0" y="11.8" width="7.2" height="1.8" fill="#10e4f8"/><path d="M8 12.2 L9 9.2 L15.4 1 L16.6 1.4 L16.6 4.6 L10.4 11 Z" fill="#fafafa" stroke="#8a8a8a" stroke-width="0.7" stroke-linejoin="round"/><path d="M11.4 6 L15.4 1 L16.6 1.4 L16.6 4.6 L13 8.4 Z" fill="#2a8cd4"/><path d="M12.4 6.6 L15.8 2.4 M13.6 7.2 L16.2 4" stroke="#e4f2fc" stroke-width="0.6"/><path d="M7.2 13.2 L8.6 9.8 L10 11.4 Z" fill="#1a8cf0"/></svg>
<svg style="left:1219px;top:556px" width="6" height="4" viewBox="0 0 6 4"><path d="M0.2 0.2 h5.2 l-2.6 3.2z" fill="#557fa6"/></svg>
<svg style="left:4px;top:781px" width="17" height="16" viewBox="0 0 17 16"><path d="M0.8 2.4 Q0.8 0.8 2.2 0.8 H6.6 Q7.6 0.8 8 2 L8.4 3 H14.4 Q15.4 3 15.4 4 V13.4 Q15.4 14.6 14.2 14.6 H2 Q0.8 14.6 0.8 13.4 Z" fill="#8e8e76" stroke="#55553f" stroke-width="1.1"/><path d="M1.4 5.6 Q1.4 4.6 2.4 4.6 H13.8 Q14.8 4.6 14.8 5.6 V13 Q14.8 14 13.8 14 H2.4 Q1.4 14 1.4 13 Z" fill="#c4c4ae"/><path d="M1.4 5 L5.4 3.6 H8 " fill="none" stroke="#6e6e58" stroke-width="0.8"/><path d="M3 7 h1.8 M3 7 v1.8 M13.2 7 h-1.8 M13.2 7 v1.8 M3 12.6 h1.8 M3 12.6 v-1.8 M13.2 12.6 h-1.8 M13.2 12.6 v-1.8" stroke="#6e6e58" stroke-width="1"/><rect x="6.4" y="7.4" width="3.4" height="4.6" rx="0.8" fill="#deded0" stroke="#55553f" stroke-width="0.9"/></svg>
<svg style="left:0;top:0" width="1" height="1"><defs><linearGradient id="ch50r" x1="0" y1="0" x2="0" y2="1"><stop offset="0" stop-color="#ee5a4a"/><stop offset="1" stop-color="#d23a2e"/></linearGradient></defs><path d="M47.13 789.66 L43.94 784.12 A7.2 7.2 0 0 1 56.39 784.69 L50.00 784.69 L50 788 Z" fill="url(#ch50r)"/><path d="M50.00 784.69 L56.39 784.69 A7.2 7.2 0 0 1 49.67 795.19 L52.87 789.66 L50 788 Z" fill="#fdd22f"/><path d="M52.87 789.66 L49.67 795.19 A7.2 7.2 0 0 1 43.94 784.12 L47.13 789.66 L50 788 Z" fill="#3cab4e"/><circle cx="50" cy="788" r="3.312" fill="#f4f6f8"/><circle cx="50" cy="788" r="2.6496" fill="#3f84e4"/></svg>
<svg style="left:237px;top:781.5px" width="16" height="14" viewBox="0 0 16 14"><rect x="0.5" y="0.5" width="15" height="13" rx="1.5" fill="#d4d2ce" stroke="#8a8884"/><rect x="2.5" y="2.5" width="11" height="9" fill="#8c8c88" stroke="#7a7a76"/><path d="M4.4 4.6 l1.8 1.4 l-1.8 1.4 M6.6 8.6 h2.6" stroke="#e4e4e0" stroke-width="0.9" fill="none"/><path d="M9 3 L13 3 L13 6 L6 11 Z" fill="#fff" fill-opacity="0.15"/></svg>
<svg style="left:433px;top:781.5px" width="16" height="14" viewBox="0 0 16 14"><path d="M1 3.2 L7.6 1 L15.2 2.4 L14.6 10.4 L7.6 13.6 L1.8 10.8 Z" fill="#a8d8f4" fill-opacity="0.8"/><path d="M1 3.2 L6.6 4.8 L7.6 13.6 L1.8 10.8Z" fill="#5a9cc8" fill-opacity="0.85"/><path d="M1 3.2 L7.6 1 L15.2 2.4 L6.6 4.8 Z" fill="#e4f4fc" fill-opacity="0.9"/><path d="M6.6 4.8 L15.2 2.4 L14.6 10.4 L7.6 13.6 Z" fill="#8ccaf4" fill-opacity="0.7"/><circle cx="11.2" cy="7.6" r="3.3" fill="#1a36b0"/><circle cx="10.3" cy="7.3" r="2.9" fill="#1a78ec"/><circle cx="9.3" cy="7.3" r="2.3" fill="#22d0e0"/><circle cx="8.5" cy="7.4" r="1.8" fill="#5adc5a"/><circle cx="7.7" cy="7.5" r="1.25" fill="#fbe332"/><circle cx="4" cy="8.6" r="1" fill="#e8d040"/><path d="M6.6 4.8 L7.6 13.6 M1 3.2 L6.6 4.8 L15.2 2.4" fill="none" stroke="#f4fbff" stroke-width="0.8" stroke-opacity="0.9"/></svg>
<svg style="left:627px;top:783px" width="15" height="11" viewBox="0 0 15 11"><rect x="0.5" y="0.5" width="14" height="10" fill="#fff" stroke="#9a9894" stroke-width="1"/><rect x="1.6" y="1.6" width="11.8" height="7.8" fill="#f4f3f1"/><path d="M5 2 v7 M2 5.4 h11" stroke="#d0cdc8" stroke-width="0.7"/><path d="M8 4.4 h4" stroke="#e04040" stroke-width="0.8"/><path d="M8 6.4 h4" stroke="#4a8ae0" stroke-width="0.8"/></svg>
<svg style="left:1155px;top:781.5px" width="16" height="14" viewBox="0 0 16 14"><path d="M1 3.2 L7.6 1 L15.2 2.4 L14.6 10.4 L7.6 13.6 L1.8 10.8 Z" fill="#a8d8f4" fill-opacity="0.8"/><path d="M1 3.2 L6.6 4.8 L7.6 13.6 L1.8 10.8Z" fill="#5a9cc8" fill-opacity="0.85"/><path d="M1 3.2 L7.6 1 L15.2 2.4 L6.6 4.8 Z" fill="#e4f4fc" fill-opacity="0.9"/><path d="M6.6 4.8 L15.2 2.4 L14.6 10.4 L7.6 13.6 Z" fill="#8ccaf4" fill-opacity="0.7"/><circle cx="11.2" cy="7.6" r="3.3" fill="#1a36b0"/><circle cx="10.3" cy="7.3" r="2.9" fill="#1a78ec"/><circle cx="9.3" cy="7.3" r="2.3" fill="#22d0e0"/><circle cx="8.5" cy="7.4" r="1.8" fill="#5adc5a"/><circle cx="7.7" cy="7.5" r="1.25" fill="#fbe332"/><circle cx="4" cy="8.6" r="1" fill="#e8d040"/><path d="M6.6 4.8 L7.6 13.6 M1 3.2 L6.6 4.8 L15.2 2.4" fill="none" stroke="#f4fbff" stroke-width="0.8" stroke-opacity="0.9"/></svg>
</div>
</body></html>
